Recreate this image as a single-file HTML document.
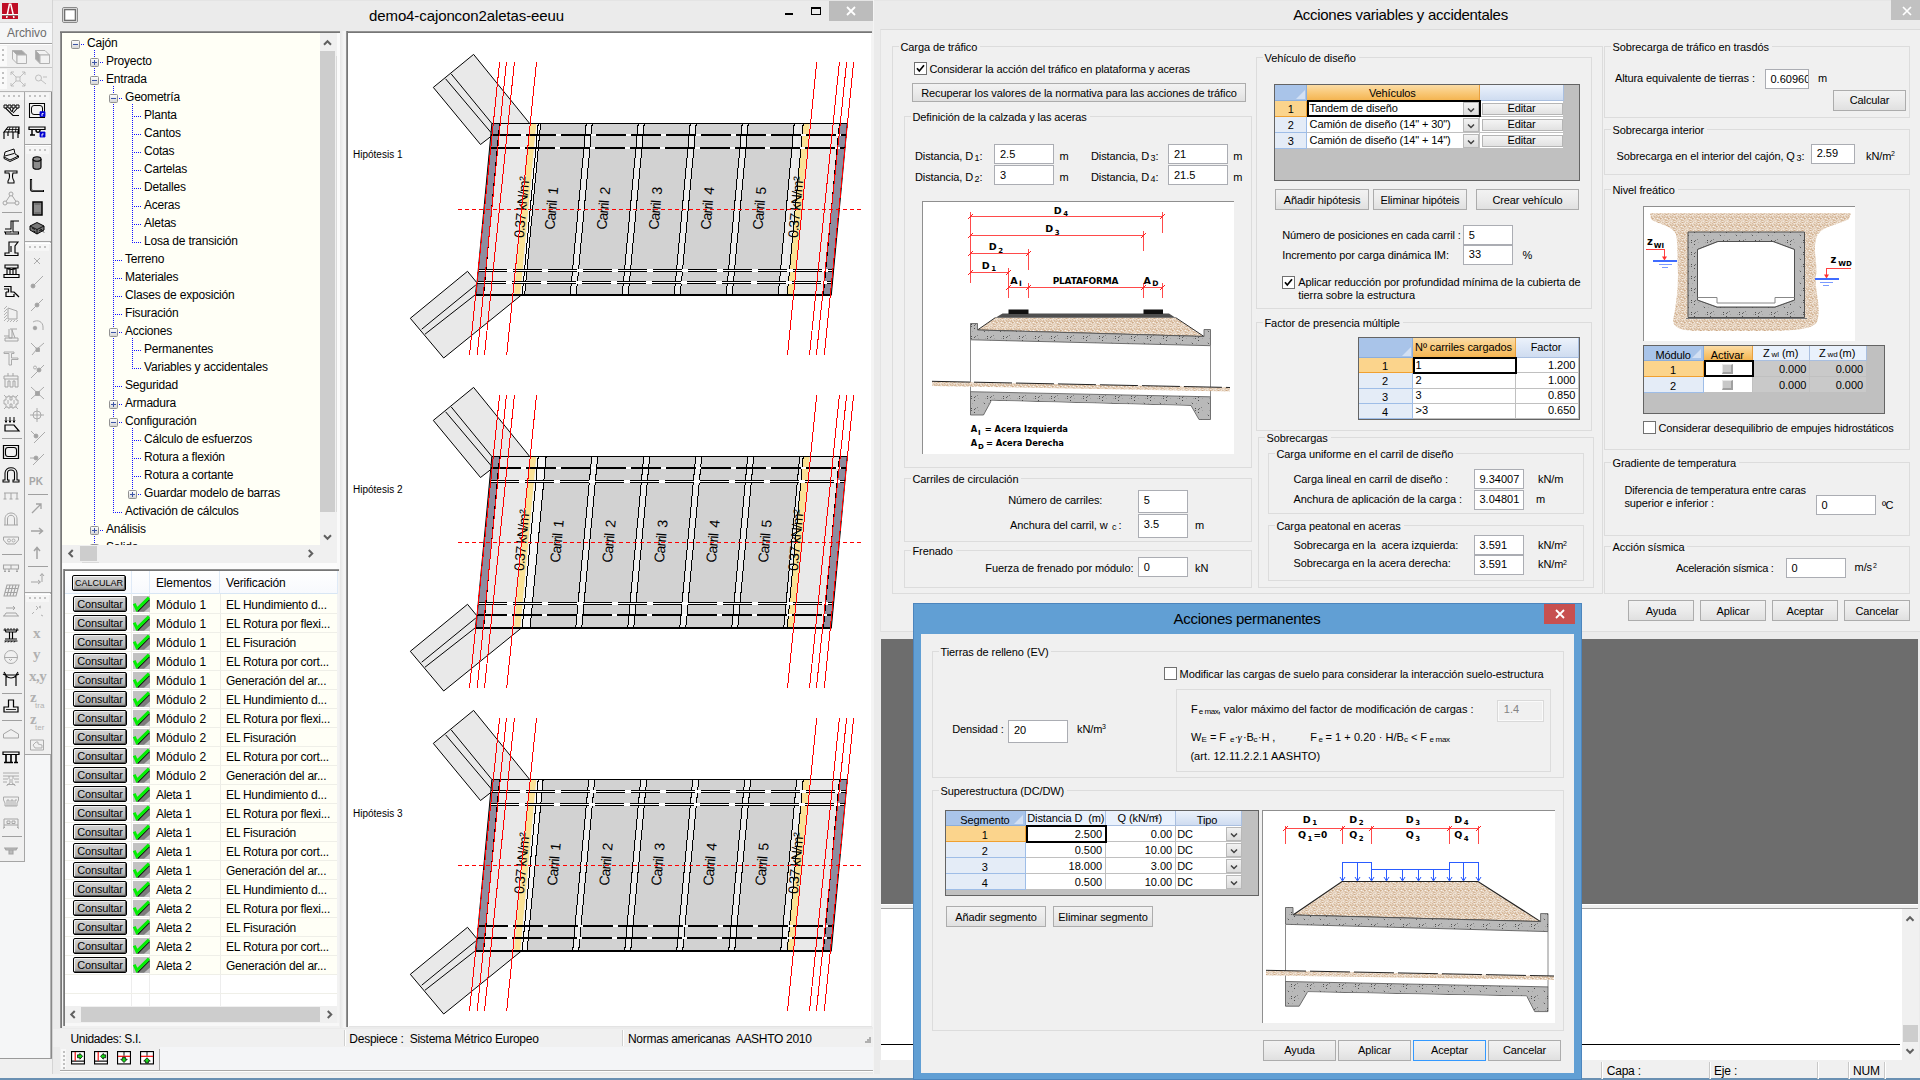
<!DOCTYPE html>
<html lang="es"><head><meta charset="utf-8"><title>demo4-cajoncon2aletas-eeuu</title>
<style>
html,body{margin:0;padding:0;width:1920px;height:1080px;overflow:hidden;background:#f0f0f0;}
body{position:relative;font-family:"Liberation Sans",sans-serif;font-size:12px;color:#000;}
div,span,svg{position:absolute;box-sizing:border-box;}
span{white-space:pre;}
svg{overflow:visible;}
.btn{border:1px solid #acacac;background:linear-gradient(#f2f2f2,#e4e4e4);text-align:center;font-size:11px;}
.inp{border:1px solid #abadb3;background:#fff;font-size:11px;}
.gb{border:1px solid #dcdcdc;}
</style></head><body>
<div style="left:0px;top:0px;width:52px;height:1080px;background:#f0f0f0;"></div>
<div style="left:0px;top:0px;width:52px;height:23px;background:#ebebeb;"></div>
<div style="left:0px;top:23px;width:52px;height:20px;background:#f5f6f7;"></div>
<div style="left:0px;top:22px;width:52px;height:1px;background:#dadada;"></div>
<div style="left:0px;top:43px;width:52px;height:1px;background:#a0a0a0;"></div>
<div style="left:0px;top:44px;width:52px;height:1px;background:#fff;"></div>
<div style="left:52px;top:0px;width:822px;height:1074px;background:#ebebeb;"></div>
<div style="left:52px;top:0px;width:822px;height:1px;background:#e4e4e4;"></div>
<div style="left:52px;top:0px;width:1px;height:1074px;background:#d4d4d4;"></div>
<div style="left:874px;top:0px;width:1046px;height:1080px;background:#ebebeb;"></div>
<div style="left:874px;top:0px;width:1046px;height:1px;background:#e6e6e6;"></div>
<div style="left:873px;top:0px;width:1px;height:1074px;background:#f4f4f4;"></div>
<div style="left:880px;top:29px;width:1040px;height:603px;background:#f0f0f0;border-top:1px solid #dadada;border-left:1px solid #e3e3e3;border-bottom:1px solid #dedede;"></div>
<div style="left:881px;top:639px;width:1037px;height:265px;background:#6d6d6d;"></div>
<div style="left:881px;top:904px;width:1037px;height:5px;background:#f0f0f0;border-top:1px solid #fff;border-bottom:1px solid #a0a0a0;"></div>
<div style="left:881px;top:909px;width:1021px;height:151px;background:#fff;"></div>
<div style="left:1902px;top:909px;width:17px;height:151px;background:#f0f0f0;"></div>
<div style="left:881px;top:1044px;width:1019px;height:1px;background:#000;"></div>
<div style="left:880px;top:1060px;width:1040px;height:20px;background:#f0f0f0;"></div>
<div style="left:0px;top:1074px;width:1920px;height:6px;background:#f0f0f0;"></div>
<div style="left:0px;top:1078px;width:1920px;height:2px;background:#6a90b2;"></div>
<div style="left:0px;top:92px;width:51px;height:982px;background:#f5f6f7;"></div>
<div style="left:50px;top:92px;width:1px;height:967px;background:#b4b4b4;"></div>
<div style="left:51px;top:92px;width:1px;height:967px;background:#8a8a8a;"></div>
<div style="left:0px;top:1058px;width:52px;height:1px;background:#9a9a9a;"></div>
<div style="left:0px;top:1059px;width:52px;height:15px;background:#f0f0f0;"></div>
<svg style="left:2px;top:3px" width="16" height="16" viewBox="0 0 16 16"><rect width="16" height="16" fill="#bf0d25"/><path d="M4.6 15 L7.4 1.2 H8.8 L12 15" stroke="#fff" stroke-width="1.5" fill="none" stroke-linejoin="miter"/><path d="M0 11.5 H16" stroke="#fff" stroke-width="1"/><path d="M0 12.5 H16" stroke="#8a6a6a" stroke-width="1"/></svg>
<span style="left:7px;top:26.84px;font-size:12px;line-height:12px;color:#6d6d6d;letter-spacing:-0.05px;">Archivo</span>
<div style="left:0px;top:45px;width:52px;height:22px;background:#f0f0f0;"></div>
<div style="left:0px;top:46px;width:7px;height:20px;background:#fafafa;"></div>
<div style="left:2px;top:49px;width:2px;height:2px;background:#c0c0c0;"></div>
<div style="left:2px;top:54px;width:2px;height:2px;background:#c0c0c0;"></div>
<div style="left:2px;top:59px;width:2px;height:2px;background:#c0c0c0;"></div>
<div style="left:0px;top:67px;width:52px;height:1px;background:#c5c5c5;"></div>
<div style="left:0px;top:68px;width:52px;height:23px;background:#f0f0f0;"></div>
<div style="left:0px;top:69px;width:7px;height:20px;background:#fafafa;"></div>
<div style="left:2px;top:72px;width:2px;height:2px;background:#c0c0c0;"></div>
<div style="left:2px;top:77px;width:2px;height:2px;background:#c0c0c0;"></div>
<div style="left:2px;top:82px;width:2px;height:2px;background:#c0c0c0;"></div>
<div style="left:0px;top:91px;width:52px;height:1px;background:#b5b5b5;"></div>
<svg style="left:11.5px;top:49.5px" width="16" height="15" viewBox="0 0 16 15"><path d="M.5 .5 H10 L14.5 5 H5Z" fill="#a6a6a6" stroke="#b2b2b2"/><path d="M.5 .5 L5 5 V13.5 L.5 9Z" fill="#f2f2f2" stroke="#b2b2b2"/><path d="M5 5 H14.5 V13.5 H5Z" fill="#f2f2f2" stroke="#b2b2b2"/></svg>
<svg style="left:34.5px;top:49.5px" width="16" height="15" viewBox="0 0 16 15"><path d="M.5 .5 H10 L14.5 5 H5Z" fill="#f2f2f2" stroke="#b2b2b2"/><path d="M.5 .5 L5 5 V13.5 L.5 9Z" fill="#a6a6a6" stroke="#b2b2b2"/><path d="M5 5 H14.5 V13.5 H5Z" fill="#f2f2f2" stroke="#b2b2b2"/></svg>
<svg style="left:9.0px;top:70.0px" width="18" height="18" viewBox="0 0 18 18"><path d="M2 2 L16 16 M2 16 L16 2 M2 5 V2 H5 M13 2 H16 V5 M2 13 V16 H5 M16 13 V16 H13" stroke="#b4b4b4" fill="none" stroke-width="0.82"/><path d="M7 7 h4 v4 h-4z" stroke="#b4b4b4" fill="#f0f0f0" stroke-width="0.82"/></svg>
<svg style="left:32.0px;top:70.0px" width="18" height="18" viewBox="0 0 18 18"><path d="M6.5 8 m-3 0 a3 3 0 1 0 6 0 a3 3 0 1 0 -6 0 M9 10 L14 14 M11 7 H15" stroke="#b4b4b4" fill="none" stroke-width="0.82"/></svg>
<div style="left:0px;top:92px;width:25px;height:770px;background:#f0f0f0;border-right:1px solid #a5a5a5;border-bottom:1px solid #a5a5a5;"></div>
<div style="left:0px;top:93px;width:24px;height:7px;background:#f6f6f6;"></div>
<div style="left:3px;top:95px;width:2px;height:2px;background:#c3c3c3;"></div>
<div style="left:8px;top:95px;width:2px;height:2px;background:#c3c3c3;"></div>
<div style="left:13px;top:95px;width:2px;height:2px;background:#c3c3c3;"></div>
<div style="left:18px;top:95px;width:2px;height:2px;background:#c3c3c3;"></div>
<svg style="left:2.0px;top:102.0px" width="18" height="18" viewBox="0 0 18 18"><path d="M2 3h3v3h-3z M6 3h3v3h-3z M10 3h3v3h-3z M14 3h3v3h-3z" stroke="#000" fill="none" stroke-width="0.98"/><path d="M3.5 6 L11 13.5 H17 M7.5 6 L9.5 9.5 M11.5 6 L10 10 M15.5 6 L11 11" stroke="#000" fill="none" stroke-width="1.07"/></svg>
<svg style="left:2.0px;top:124.0px" width="18" height="18" viewBox="0 0 18 18"><path d="M2 8 L6 3 H17 L16 8 Z M2 8 V15 M16 8 V14 M6 8 V12 M11 8 V15 M17 3 V10" stroke="#000" fill="none" stroke-width="1.15"/><path d="M4 5.5 H16.5 M8 3 L6.5 8 M11 3 L10 8 M14 3 L13.5 8" stroke="#000" fill="none" stroke-width="0.82"/></svg>
<svg style="left:2.0px;top:146.0px" width="18" height="18" viewBox="0 0 18 18"><path d="M3 6 L12 3 L13 8 L16.5 10 L8 14 L2 11 Z M2 11 L2 12.5 L8 15.5 L16.5 11.5 V10 M3 10 L12 7.5" stroke="#000" fill="none" stroke-width="0.98"/></svg>
<svg style="left:2.0px;top:168.0px" width="18" height="18" viewBox="0 0 18 18"><path d="M3 3 H15 V5 H11 C10 8 10 10 12 13 V15 H6 V13 C8 10 8 8 7 5 H3 Z" stroke="#000" fill="none" stroke-width="1.07"/></svg>
<svg style="left:2.0px;top:190.0px" width="18" height="18" viewBox="0 0 18 18"><path d="M9 4 L3 13 H15 Z" stroke="#a3a3a3" fill="none" stroke-width="0.98"/><path d="M9 4 m-2 0 a2 2 0 1 0 4 0 a2 2 0 1 0 -4 0 M3 13 m-2 0 a2 2 0 1 0 4 0 a2 2 0 1 0 -4 0 M15 13 m-2 0 a2 2 0 1 0 4 0 a2 2 0 1 0 -4 0" stroke="#a3a3a3" fill="#f0f0f0" stroke-width="0.98"/></svg>
<div style="left:2px;top:212px;width:20px;height:1px;background:#a0a0a0;"></div>
<svg style="left:2.0px;top:218.0px" width="18" height="18" viewBox="0 0 18 18"><path d="M17 3 H9 V11 H3 M2 14 H9 V13 M11 3.5 V14 H16.5 V16 H3.5 V14" stroke="#000" fill="none" stroke-width="1.07"/></svg>
<svg style="left:2.0px;top:239.0px" width="18" height="18" viewBox="0 0 18 18"><path d="M7 3 H16 L13 7 V14 H16 V16.5 H3 V14 H7 Z M9 7 V13" stroke="#000" fill="none" stroke-width="1.15"/></svg>
<svg style="left:2.0px;top:262.0px" width="18" height="18" viewBox="0 0 18 18"><path d="M3 3 H16 V6 H3 Z M5 6 V12 M8 6 V12 M11 6 V12 M14 6 V12 M2 12.5 H17 V15.5 H2 Z M5 6 C7 8 12 8 14 6" stroke="#000" fill="none" stroke-width="1.15"/></svg>
<svg style="left:2.0px;top:283.0px" width="18" height="18" viewBox="0 0 18 18"><path d="M2 3.5 H9 V9 H12 L14 11 L17 14 M4 9 V13.5 H12 V11 M4 9 H6.5 V6 H2" stroke="#000" fill="none" stroke-width="1.23"/></svg>
<svg style="left:2.0px;top:305.0px" width="18" height="18" viewBox="0 0 18 18"><path d="M6 3 L15 6 V14 H6 Z" stroke="#a3a3a3" fill="none" stroke-width="0.98"/><path d="M2 4 L5 1 M2 7 L5 4 M2 10 L5 7 M2 13 L5 10 M2 16 L5 13 M5 17 L7 15 M8 17 L10 15 M11 17 L13 15 M14 17 L16 15" stroke="#a3a3a3" fill="none" stroke-width="0.82"/></svg>
<svg style="left:2.0px;top:327.0px" width="18" height="18" viewBox="0 0 18 18"><path d="M15 2 H8 M7 2 V11 H10 V2 M10 3 L13 11 M3 11 H16 V14 H3 Z M2 9 H7" stroke="#a3a3a3" fill="none" stroke-width="0.98"/></svg>
<svg style="left:2.0px;top:349.0px" width="18" height="18" viewBox="0 0 18 18"><path d="M2 3 H12 V4.5 H9.5 V9 H16 V10.5 H9.5 V16 H7 V4.5 H2 Z" stroke="#a3a3a3" fill="none" stroke-width="0.90"/></svg>
<svg style="left:2.0px;top:371.0px" width="18" height="18" viewBox="0 0 18 18"><path d="M2 5 H16 V8 H2 Z M3 8 V16 H6 V10 H8 V16 H11 V10 H13 V16 H16 V8 M6 2 V5 M11 2 V5" stroke="#a3a3a3" fill="none" stroke-width="0.98"/></svg>
<svg style="left:2.0px;top:393.0px" width="18" height="18" viewBox="0 0 18 18"><path d="M2 2 L4 4 H6 V3 H8 V4 H10 V3 H12 V4 H14 L16 2 M4 4 V7 H2 V11 H4 V14 L2 16 M14 4 V7 H16 V11 H14 V14 L16 16 M4 14 H6 V15 H8 V14 H10 V15 H12 V14 H14 M8 4 V7 H10 V4 M8 14 V11 H10 V14 M6 7 V11 M12 7 V11" stroke="#a3a3a3" fill="none" stroke-width="0.90"/></svg>
<svg style="left:2.0px;top:415.0px" width="18" height="18" viewBox="0 0 18 18"><path d="M3 10 H12 L17 16 H3 Z" stroke="#000" fill="none" stroke-width="1.23"/><path d="M4 2 V7 M8 2 V7 M12 2 V7 M3 5.5 L4 7.5 L5 5.5 M7 5.5 L8 7.5 L9 5.5 M11 5.5 L12 7.5 L13 5.5" stroke="#000" fill="none" stroke-width="0.98"/></svg>
<div style="left:2px;top:438px;width:20px;height:1px;background:#a0a0a0;"></div>
<svg style="left:2.0px;top:443.0px" width="18" height="18" viewBox="0 0 18 18"><path d="M1.5 2.5 H16.5 V15.5 H1.5 Z" stroke="#000" fill="none" stroke-width="1.23"/><path d="M6 4.5 H12 Q14.5 4.5 14.5 7 V11 Q14.5 13.5 12 13.5 H6 Q3.5 13.5 3.5 11 V7 Q3.5 4.5 6 4.5Z" stroke="#000" fill="none" stroke-width="1.07"/></svg>
<svg style="left:2.0px;top:465.0px" width="18" height="18" viewBox="0 0 18 18"><path d="M3 15 V8 C3 1 15 1 15 8 V15 H17 V17 H11 V15 H12.5 V8 C12.5 4 5.5 4 5.5 8 V15 H7 V17 H1 V15 Z" stroke="#000" fill="none" stroke-width="1.07"/></svg>
<svg style="left:2.0px;top:488.0px" width="18" height="18" viewBox="0 0 18 18"><path d="M2 5 H16 M3 5 V11 M9 5 V11 M15 5 V11 M1.5 11 H4.5 M7.5 11 H10.5 M13.5 11 H16.5" stroke="#a3a3a3" fill="none" stroke-width="0.98"/></svg>
<svg style="left:2.0px;top:510.0px" width="18" height="18" viewBox="0 0 18 18"><path d="M2 15 H16 M3 15 V9 C3 1 15 1 15 9 V15 M5.5 15 V9 C5.5 4 12.5 4 12.5 9 V15" stroke="#a3a3a3" fill="none" stroke-width="0.98"/></svg>
<svg style="left:2.0px;top:532.0px" width="18" height="18" viewBox="0 0 18 18"><path d="M1.5 5 H16.5 V8 L13 12 H5 L1.5 8 Z" stroke="#a3a3a3" fill="none" stroke-width="0.98"/><path d="M7 8.5 m-1.5 0 a1.5 1.5 0 1 0 3 0 a1.5 1.5 0 1 0 -3 0 M11.5 8.5 m-1.5 0 a1.5 1.5 0 1 0 3 0 a1.5 1.5 0 1 0 -3 0" stroke="#a3a3a3" fill="none" stroke-width="0.82"/></svg>
<div style="left:2px;top:554px;width:20px;height:1px;background:#a0a0a0;"></div>
<svg style="left:2.0px;top:560.0px" width="18" height="18" viewBox="0 0 18 18"><path d="M1.5 5 H16.5 V9 H1.5 Z M9 5 V9 M3 9 v2 M7 9 v2 M15 9 v2 M2 11.5 h2 M6 11.5 h2 M14 11.5 h2" stroke="#a3a3a3" fill="none" stroke-width="1.07"/></svg>
<svg style="left:2.0px;top:582.0px" width="18" height="18" viewBox="0 0 18 18"><path d="M5 3 H17 L14 14 H2 Z M4 6.5 H16 M3 10.5 H15 M8 3 L5 14 M11 3 L8 14 M14 3 L11 14" stroke="#a3a3a3" fill="none" stroke-width="1.07"/></svg>
<svg style="left:2.0px;top:604.0px" width="18" height="18" viewBox="0 0 18 18"><path d="M4 4 H13 M11 2 L13 4 L11 6 M2 12 L4 9 H14 L16 12 M1 12 H17" stroke="#a3a3a3" fill="none" stroke-width="0.98"/></svg>
<svg style="left:2.0px;top:626.0px" width="18" height="18" viewBox="0 0 18 18"><path d="M1.5 4 H16.5 M3 4 L4 6 H14 L15 4 M7.5 6 V13 M10.5 6 V13 M3 13 H15 M2.5 15 H15.5" stroke="#000" fill="none" stroke-width="1.15"/><path d="M3 2 v2 M6 2 v2 M9 2 v2 M12 2 v2 M15 2 v2 M4 15 l-1 1.5 M7 15 l-1 1.5 M10 15 l-1 1.5 M13 15 l-1 1.5" stroke="#000" fill="none" stroke-width="0.82"/></svg>
<svg style="left:2.0px;top:648.0px" width="18" height="18" viewBox="0 0 18 18"><path d="M9 9 m-6.5 0 a6.5 6.5 0 1 0 13 0 a6.5 6.5 0 1 0 -13 0 M2.5 9.5 H15.5 M7 11 L8.5 12.5 L10 11" stroke="#a3a3a3" fill="none" stroke-width="0.90"/></svg>
<svg style="left:2.0px;top:670.0px" width="18" height="18" viewBox="0 0 18 18"><path d="M1 4 L3 5 H15 L17 4 M4 5 V16 M14 5 V16 M4 6 Q9 10 14 6 M2 2 L4 5 M16 2 L14 5" stroke="#000" fill="none" stroke-width="1.15"/></svg>
<div style="left:2px;top:693px;width:20px;height:1px;background:#a0a0a0;"></div>
<svg style="left:2.0px;top:697.0px" width="18" height="18" viewBox="0 0 18 18"><path d="M6.5 3 H11.5 V10 H16 V15 H2 V10 H6.5 Z" stroke="#000" fill="none" stroke-width="1.23"/><path d="M4 12.5 H14" stroke="#000" fill="none" stroke-width="0.82"/></svg>
<div style="left:2px;top:720px;width:20px;height:1px;background:#a0a0a0;"></div>
<svg style="left:2.0px;top:726.0px" width="18" height="18" viewBox="0 0 18 18"><path d="M1.5 8 L9 3.5 L16.5 8 V12 H1.5 Z" stroke="#a3a3a3" fill="none" stroke-width="0.98"/></svg>
<svg style="left:2.0px;top:748.0px" width="18" height="18" viewBox="0 0 18 18"><path d="M1 4 H17 V6.5 H1 Z" stroke="#000" fill="none" stroke-width="1.23"/><path d="M4 7 V15 M9 7 V15 M14 7 V15 M2 14.5 H7 M7 14.5 H11 M12 14.5 H16" stroke="#000" fill="none" stroke-width="1.64"/></svg>
<svg style="left:2.0px;top:770.0px" width="18" height="18" viewBox="0 0 18 18"><path d="M1 3 H17 M1 6 H17 M1 9 H6 M12 9 H17 M1 12 H5 M13 12 H17 M7 6 V9 M11 6 V9 M8 9 V13 L5 15 V16 M10 9 V13 L13 15 V16 M5 14.5 H13" stroke="#a3a3a3" fill="none" stroke-width="0.90"/></svg>
<svg style="left:2.0px;top:792.0px" width="18" height="18" viewBox="0 0 18 18"><path d="M1.5 5 H16.5 V8 L15 11 V14 H3 V11 L1.5 8 Z M5 8 V14 M7 8 V14 M9 8 V14 M11 8 V14 M13 8 V14 M5 8 H7 M9 8 H11 M13 8 H15" stroke="#a3a3a3" fill="none" stroke-width="0.90"/></svg>
<svg style="left:2.0px;top:814.0px" width="18" height="18" viewBox="0 0 18 18"><path d="M2 5 H16 V11 H2 Z M5 7 H8 V9.5 H5 Z M10 7 H13 V9.5 H10 Z M2 11 V14 M16 11 V14 M1 14.5 L3 13 M17 14.5 L15 13" stroke="#a3a3a3" fill="none" stroke-width="0.98"/></svg>
<div style="left:2px;top:836px;width:20px;height:1px;background:#a0a0a0;"></div>
<svg style="left:2.0px;top:842.0px" width="18" height="18" viewBox="0 0 18 18"><path d="M2 6 H16 M3 6 L4 8 H14 L15 6 M7 8 V12 H11 V8" stroke="#a3a3a3" fill="#bbb" stroke-width="1.07"/></svg>
<div style="left:25px;top:92px;width:26px;height:53px;background:#f0f0f0;border-bottom:1px solid #a5a5a5;"></div>
<div style="left:26px;top:93px;width:23px;height:7px;background:#f6f6f6;"></div>
<div style="left:29px;top:95px;width:2px;height:2px;background:#c3c3c3;"></div>
<div style="left:34px;top:95px;width:2px;height:2px;background:#c3c3c3;"></div>
<div style="left:39px;top:95px;width:2px;height:2px;background:#c3c3c3;"></div>
<div style="left:44px;top:95px;width:2px;height:2px;background:#c3c3c3;"></div>
<svg style="left:28.0px;top:102.0px" width="18" height="18" viewBox="0 0 18 18"><path d="M1.5 1.5 H16.5 V15.5 H1.5 Z" stroke="#000" fill="#f4f4f4" stroke-width="1.07"/><path d="M6 3.5 H12 Q14.5 3.5 14.5 6 V10 Q14.5 12.5 12 12.5 H6 Q3.5 12.5 3.5 10 V6 Q3.5 3.5 6 3.5Z" stroke="#000" fill="none" stroke-width="0.98"/><path d="M12 9.7 H17 V14.5 H12 Z" stroke="#0000d0" fill="#0000d0" stroke-width="0.82"/><path d="M14 14 V11.6 H15.6" stroke="#fff" fill="none" stroke-width="0.98"/></svg>
<svg style="left:28.0px;top:124.0px" width="18" height="18" viewBox="0 0 18 18"><path d="M1 3 H17 V5.5 H1 Z" stroke="#000" fill="none" stroke-width="1.23"/><path d="M4 6 V11 M8 6 C8 9 12 9 12 6 M2 11 H7" stroke="#000" fill="none" stroke-width="1.48"/><path d="M12 8 H17 V13 H12 Z" stroke="#0000d0" fill="#0000d0" stroke-width="0.82"/><path d="M14 12.5 V10 H15.6" stroke="#fff" fill="none" stroke-width="0.98"/></svg>
<div style="left:25px;top:145px;width:26px;height:97px;background:#f0f0f0;border-bottom:1px solid #a5a5a5;border-top:1px solid #fff;"></div>
<div style="left:26px;top:147px;width:23px;height:7px;background:#f6f6f6;"></div>
<div style="left:29px;top:149px;width:2px;height:2px;background:#c3c3c3;"></div>
<div style="left:34px;top:149px;width:2px;height:2px;background:#c3c3c3;"></div>
<div style="left:39px;top:149px;width:2px;height:2px;background:#c3c3c3;"></div>
<div style="left:44px;top:149px;width:2px;height:2px;background:#c3c3c3;"></div>
<svg style="left:28.0px;top:154.0px" width="18" height="18" viewBox="0 0 18 18"><path d="M5 5 V13 C5 16 13 16 13 13 V5" stroke="#000" fill="#8c8c8c" stroke-width="1.15"/><path d="M5 5 C5 2 13 2 13 5 C13 8 5 8 5 5Z" stroke="#000" fill="#8c8c8c" stroke-width="1.15"/></svg>
<svg style="left:28.0px;top:177.0px" width="18" height="18" viewBox="0 0 18 18"><path d="M3 2 V12 Q3 14 5 14 H16" stroke="#000" fill="none" stroke-width="2.13"/><path d="M3.2 3 V12 Q3.2 13.8 5 13.8 H15" stroke="#d0d0d0" fill="none" stroke-width="0.57"/></svg>
<svg style="left:28.0px;top:199.0px" width="18" height="18" viewBox="0 0 18 18"><path d="M5 3 H14 V16 H5 Z" stroke="#000" fill="#8c8c8c" stroke-width="1.48"/><path d="M6.5 5 H12.5 M6.5 14 H12.5" stroke="#4a4a4a" fill="none" stroke-width="0.82"/></svg>
<svg style="left:28.0px;top:219.0px" width="18" height="18" viewBox="0 0 18 18"><path d="M2 7 L9 3.5 L16 7 V11 L9 15 L2 11 Z" stroke="#000" fill="#777" stroke-width="0.98"/><path d="M2 7 L9 10.5 L16 7 M9 10.5 V15 M4 9 l3 1.5 M11 12 l3 -1.5 M5.5 12 l2 1 M12 9.5 l4 4" stroke="#000" fill="none" stroke-width="0.82"/></svg>
<div style="left:25px;top:243px;width:26px;height:350px;background:#f0f0f0;border-bottom:1px solid #a5a5a5;border-top:1px solid #fff;"></div>
<div style="left:26px;top:244px;width:23px;height:7px;background:#f6f6f6;"></div>
<div style="left:29px;top:246px;width:2px;height:2px;background:#c3c3c3;"></div>
<div style="left:34px;top:246px;width:2px;height:2px;background:#c3c3c3;"></div>
<div style="left:39px;top:246px;width:2px;height:2px;background:#c3c3c3;"></div>
<div style="left:44px;top:246px;width:2px;height:2px;background:#c3c3c3;"></div>
<svg style="left:28.0px;top:252.0px" width="18" height="18" viewBox="0 0 18 18"><path d="M6 6 L12 12 M12 6 L6 12" stroke="#a3a3a3" fill="none" stroke-width="0.90"/></svg>
<svg style="left:28.0px;top:274.0px" width="18" height="18" viewBox="0 0 18 18"><path d="M15 2 L5 12" stroke="#a3a3a3" fill="none" stroke-width="0.90"/><path d="M5 12 m-2 0 a2 2 0 1 0 4 0 a2 2 0 1 0 -4 0" stroke="#a3a3a3" fill="#a3a3a3" stroke-width="0.82"/></svg>
<svg style="left:28.0px;top:296.0px" width="18" height="18" viewBox="0 0 18 18"><path d="M15 3 L3 15" stroke="#a3a3a3" fill="none" stroke-width="0.90"/><path d="M9 9 m-2 0 a2 2 0 1 0 4 0 a2 2 0 1 0 -4 0" stroke="#a3a3a3" fill="#a3a3a3" stroke-width="0.82"/></svg>
<svg style="left:28.0px;top:318.0px" width="18" height="18" viewBox="0 0 18 18"><path d="M5 4 C10 1 15 4 15 9 V12" stroke="#a3a3a3" fill="none" stroke-width="0.90"/><path d="M7 10 m-1.8 0 a1.8 1.8 0 1 0 3.6 0 a1.8 1.8 0 1 0 -3.6 0" stroke="#a3a3a3" fill="#a3a3a3" stroke-width="0.82"/></svg>
<svg style="left:28.0px;top:340.0px" width="18" height="18" viewBox="0 0 18 18"><path d="M3 3 L9 9 L16 3 M9 9 L4 15" stroke="#a3a3a3" fill="none" stroke-width="0.90"/><path d="M8 8 h3.5 v3.5 h-3.5z" stroke="#a3a3a3" fill="#a3a3a3" stroke-width="0.82"/></svg>
<svg style="left:28.0px;top:362.0px" width="18" height="18" viewBox="0 0 18 18"><path d="M16 3 L3 16" stroke="#a3a3a3" fill="none" stroke-width="0.90"/><path d="M11 8 m-2 0 a2 2 0 1 0 4 0 a2 2 0 1 0 -4 0" stroke="#a3a3a3" fill="#a3a3a3" stroke-width="0.82"/><path d="M7 5.5 m-1.5 0 a1.5 1.5 0 1 0 3 0 a1.5 1.5 0 1 0 -3 0" stroke="#a3a3a3" fill="none" stroke-width="0.82"/></svg>
<svg style="left:28.0px;top:384.0px" width="18" height="18" viewBox="0 0 18 18"><path d="M3 3 L16 15 M16 3 L3 15" stroke="#a3a3a3" fill="none" stroke-width="0.90"/><path d="M7.5 7.5 h4 v4 h-4z" stroke="#a3a3a3" fill="#a3a3a3" stroke-width="0.82"/></svg>
<svg style="left:28.0px;top:406.0px" width="18" height="18" viewBox="0 0 18 18"><path d="M9 2 V16 M2 9 H16 M9 9 m-4 0 a4 4 0 1 0 8 0 a4 4 0 1 0 -8 0" stroke="#a3a3a3" fill="none" stroke-width="0.90"/></svg>
<svg style="left:28.0px;top:428.0px" width="18" height="18" viewBox="0 0 18 18"><path d="M17 4 L6 15 M3 3 L8 8" stroke="#a3a3a3" fill="none" stroke-width="0.90"/><path d="M8 8 m-2 0 a2 2 0 1 0 4 0 a2 2 0 1 0 -4 0" stroke="#a3a3a3" fill="#a3a3a3" stroke-width="0.82"/></svg>
<svg style="left:28.0px;top:450.0px" width="18" height="18" viewBox="0 0 18 18"><path d="M16 4 L5 15 M2 8 H8" stroke="#a3a3a3" fill="none" stroke-width="0.90"/><path d="M8 8 m-2 0 a2 2 0 1 0 4 0 a2 2 0 1 0 -4 0" stroke="#a3a3a3" fill="#a3a3a3" stroke-width="0.82"/></svg>
<span style="left:29px;top:476.54px;font-size:10px;line-height:10px;color:#a6a6a6;font-weight:bold;">PK</span>
<div style="left:28px;top:494px;width:20px;height:1px;background:#a0a0a0;"></div>
<svg style="left:28.0px;top:499.0px" width="18" height="18" viewBox="0 0 18 18"><path d="M4 14 L13 5 M8 5 H13 V10" stroke="#a3a3a3" fill="none" stroke-width="1.31"/></svg>
<svg style="left:28.0px;top:522.0px" width="18" height="18" viewBox="0 0 18 18"><path d="M3 9 H14 M11 6 L14.5 9 L11 12" stroke="#a3a3a3" fill="none" stroke-width="1.48"/></svg>
<svg style="left:28.0px;top:544.0px" width="18" height="18" viewBox="0 0 18 18"><path d="M9 15 V4 M6 7 L9 3.5 L12 7" stroke="#a3a3a3" fill="none" stroke-width="1.48"/></svg>
<div style="left:28px;top:566px;width:20px;height:1px;background:#a0a0a0;"></div>
<svg style="left:28.0px;top:570.0px" width="18" height="18" viewBox="0 0 18 18"><path d="M3 12 H12 M10 10 L12.5 12 L10 14 M14 12 V4 M12 6 L14 3.5 L16 6" stroke="#a3a3a3" fill="none" stroke-width="0.98"/></svg>
<div style="left:25px;top:594px;width:26px;height:161px;background:#f0f0f0;border-bottom:1px solid #a5a5a5;border-top:1px solid #fff;"></div>
<div style="left:26px;top:595px;width:23px;height:7px;background:#f6f6f6;"></div>
<div style="left:29px;top:597px;width:2px;height:2px;background:#c3c3c3;"></div>
<div style="left:34px;top:597px;width:2px;height:2px;background:#c3c3c3;"></div>
<div style="left:39px;top:597px;width:2px;height:2px;background:#c3c3c3;"></div>
<div style="left:44px;top:597px;width:2px;height:2px;background:#c3c3c3;"></div>
<svg style="left:28.0px;top:602.0px" width="18" height="18" viewBox="0 0 18 18"><path d="M4 12 l2 -2 M8 4 l2 2 l-2 2 M13 4 l-2 1 l2 1 M13 13 l2 1" stroke="#a3a3a3" fill="none" stroke-width="0.82"/></svg>
<span style="left:33px;top:626.30px;font-size:15px;line-height:15px;color:#b0b0b0;font-family:'Liberation Serif',serif;font-weight:bold;">x</span>
<span style="left:33px;top:647.30px;font-size:15px;line-height:15px;color:#b0b0b0;font-family:'Liberation Serif',serif;font-weight:bold;">y</span>
<span style="left:29px;top:669.30px;font-size:15px;line-height:15px;color:#b0b0b0;letter-spacing:-0.5px;font-family:'Liberation Serif',serif;font-weight:bold;">x,y</span>
<span style="left:30px;top:690.30px;font-size:15px;line-height:15px;color:#b0b0b0;font-family:'Liberation Serif',serif;font-weight:bold;">z</span>
<span style="left:35px;top:702.23px;font-size:8px;line-height:8px;color:#b0b0b0;">tra</span>
<span style="left:30px;top:712.30px;font-size:15px;line-height:15px;color:#b0b0b0;font-family:'Liberation Serif',serif;font-weight:bold;">z</span>
<span style="left:35px;top:724.23px;font-size:8px;line-height:8px;color:#b0b0b0;">ter</span>
<svg style="left:28.0px;top:736.0px" width="18" height="18" viewBox="0 0 18 18"><path d="M2.5 4 H15.5 V14 H2.5 Z" stroke="#a3a3a3" fill="none" stroke-width="0.90"/><path d="M5 9 L8 6 H10 V8 L14 9 V12 H7 Z" stroke="#a3a3a3" fill="none" stroke-width="0.82"/></svg>
<svg style="left:62px;top:7px" width="16" height="16" viewBox="0 0 16 16"><rect x=".5" y=".5" width="15" height="15" rx="1.5" fill="#fff" stroke="#8a8a8a"/><rect x="2.5" y="2.5" width="11" height="11" fill="#fff" stroke="#707070" stroke-width="1.6"/></svg>
<span style="left:369px;top:8.10px;font-size:15px;line-height:15px;color:#000;letter-spacing:-0.1px;">demo4-cajoncon2aletas-eeuu</span>
<div style="left:785px;top:13px;width:8px;height:2px;background:#000;"></div>
<div style="left:811px;top:7px;width:10px;height:8px;border:1px solid #000;border-top:2px solid #000;"></div>
<div style="left:829px;top:1px;width:44px;height:20px;background:#bcbcbc;"></div>
<svg style="left:846px;top:6px" width="10" height="10" viewBox="0 0 10 10"><path d="M1 1 L9 9 M9 1 L1 9" stroke="#fff" stroke-width="1.8" fill="none"/></svg>
<div style="left:60px;top:31px;width:282px;height:997px;background:#f0f0f0;"></div>
<div style="left:60px;top:31px;width:2px;height:997px;background:linear-gradient(90deg,#a0a0a0,#696969);"></div>
<div style="left:60px;top:31px;width:280px;height:2px;background:linear-gradient(#a0a0a0,#696969);"></div>
<div style="left:62px;top:33px;width:258px;height:512px;background:#fffff6;"></div>
<div style="left:320px;top:33px;width:17px;height:513px;background:#f0f0f0;"></div>
<div style="left:320px;top:51px;width:15px;height:461px;background:#cdcdcd;"></div>
<div style="left:336px;top:56px;width:1px;height:456px;background:#dadada;"></div>
<svg style="left:0;top:0" width="1" height="1"><path d="M324.0 44.75 L327.5 41.25 L331.0 44.75" stroke="#606060" stroke-width="2" fill="none"/></svg>
<svg style="left:0;top:0" width="1" height="1"><path d="M324.0 535.25 L327.5 538.75 L331.0 535.25" stroke="#606060" stroke-width="2" fill="none"/></svg>
<div style="left:62px;top:545px;width:275px;height:18px;background:#f0f0f0;"></div>
<div style="left:80px;top:546px;width:17px;height:15px;background:#cdcdcd;"></div>
<div style="left:82px;top:562px;width:17px;height:1px;background:#dadada;"></div>
<svg style="left:0;top:0" width="1" height="1"><path d="M72.75 550.0 L69.25 553.5 L72.75 557.0" stroke="#606060" stroke-width="2" fill="none"/></svg>
<svg style="left:0;top:0" width="1" height="1"><path d="M308.75 550.0 L312.25 553.5 L308.75 557.0" stroke="#606060" stroke-width="2" fill="none"/></svg>
<div style="left:62px;top:563px;width:278px;height:6px;background:#fcfcfc;"></div>
<div style="left:337px;top:33px;width:3px;height:536px;background:#fafafa;"></div>
<div style="left:340px;top:31px;width:7px;height:997px;background:linear-gradient(90deg,#e6e6e6,#f6f6f6 60%,#ededed);"></div>
<svg style="left:0;top:0;overflow:hidden" width="345" height="545" viewBox="0 0 345 545"><defs><linearGradient id="tbx" x1="0" y1="0" x2="0" y2="1"><stop offset="0" stop-color="#ffffff"/><stop offset="1" stop-color="#d4d4d4"/></linearGradient></defs><g stroke="#1414ff" stroke-width="1" stroke-dasharray="1 1" fill="none" shape-rendering="crispEdges"><path d="M94.5 50.0 V546"/><path d="M113.5 86.0 V513.0"/><path d="M132.5 104.0 V243.0"/><path d="M132.5 338.0 V369.0"/><path d="M132.5 428.0 V490.0"/><path d="M81.0 44.5 H84.0"/><path d="M100.0 62.5 H103.0"/><path d="M100.0 80.5 H103.0"/><path d="M119.0 98.5 H122.0"/><path d="M134.0 116.5 H142.0"/><path d="M134.0 134.5 H142.0"/><path d="M134.0 152.5 H142.0"/><path d="M134.0 170.5 H142.0"/><path d="M134.0 188.5 H142.0"/><path d="M134.0 206.5 H142.0"/><path d="M134.0 224.5 H142.0"/><path d="M134.0 242.5 H142.0"/><path d="M115.0 260.5 H123.0"/><path d="M115.0 278.5 H123.0"/><path d="M115.0 296.5 H123.0"/><path d="M115.0 314.5 H123.0"/><path d="M119.0 332.5 H122.0"/><path d="M134.0 350.5 H142.0"/><path d="M134.0 368.5 H142.0"/><path d="M115.0 386.5 H123.0"/><path d="M119.0 404.5 H122.0"/><path d="M119.0 422.5 H122.0"/><path d="M134.0 440.5 H142.0"/><path d="M134.0 458.5 H142.0"/><path d="M134.0 476.5 H142.0"/><path d="M138.0 494.5 H141.0"/><path d="M115.0 512.5 H123.0"/><path d="M100.0 530.5 H103.0"/></g><rect x="71.5" y="40.5" width="8" height="8" rx="1" fill="url(#tbx)" stroke="#919191"/><path d="M73.0 44.5 H78.0" stroke="#3c55a5" stroke-width="1" shape-rendering="crispEdges"/><rect x="90.5" y="58.5" width="8" height="8" rx="1" fill="url(#tbx)" stroke="#919191"/><path d="M92.0 62.5 H97.0" stroke="#3c55a5" stroke-width="1" shape-rendering="crispEdges"/><path d="M94.5 60.0 V65.0" stroke="#3c55a5" stroke-width="1" shape-rendering="crispEdges"/><rect x="90.5" y="76.5" width="8" height="8" rx="1" fill="url(#tbx)" stroke="#919191"/><path d="M92.0 80.5 H97.0" stroke="#3c55a5" stroke-width="1" shape-rendering="crispEdges"/><rect x="109.5" y="94.5" width="8" height="8" rx="1" fill="url(#tbx)" stroke="#919191"/><path d="M111.0 98.5 H116.0" stroke="#3c55a5" stroke-width="1" shape-rendering="crispEdges"/><rect x="109.5" y="328.5" width="8" height="8" rx="1" fill="url(#tbx)" stroke="#919191"/><path d="M111.0 332.5 H116.0" stroke="#3c55a5" stroke-width="1" shape-rendering="crispEdges"/><rect x="109.5" y="400.5" width="8" height="8" rx="1" fill="url(#tbx)" stroke="#919191"/><path d="M111.0 404.5 H116.0" stroke="#3c55a5" stroke-width="1" shape-rendering="crispEdges"/><path d="M113.5 402.0 V407.0" stroke="#3c55a5" stroke-width="1" shape-rendering="crispEdges"/><rect x="109.5" y="418.5" width="8" height="8" rx="1" fill="url(#tbx)" stroke="#919191"/><path d="M111.0 422.5 H116.0" stroke="#3c55a5" stroke-width="1" shape-rendering="crispEdges"/><rect x="128.5" y="490.5" width="8" height="8" rx="1" fill="url(#tbx)" stroke="#919191"/><path d="M130.0 494.5 H135.0" stroke="#3c55a5" stroke-width="1" shape-rendering="crispEdges"/><path d="M132.5 492.0 V497.0" stroke="#3c55a5" stroke-width="1" shape-rendering="crispEdges"/><rect x="90.5" y="526.5" width="8" height="8" rx="1" fill="url(#tbx)" stroke="#919191"/><path d="M92.0 530.5 H97.0" stroke="#3c55a5" stroke-width="1" shape-rendering="crispEdges"/><path d="M94.5 528.0 V533.0" stroke="#3c55a5" stroke-width="1" shape-rendering="crispEdges"/><rect x="90.5" y="544.5" width="8" height="8" rx="1" fill="url(#tbx)" stroke="#919191"/><path d="M92.0 548.5 H97.0" stroke="#3c55a5" stroke-width="1" shape-rendering="crispEdges"/><path d="M94.5 546.0 V551.0" stroke="#3c55a5" stroke-width="1" shape-rendering="crispEdges"/></svg>
<div style="left:62px;top:33px;width:258px;height:512px;overflow:hidden;">
<span style="left:25.0px;top:3.84px;font-size:12px;line-height:12px;color:#000;letter-spacing:-0.2px;">Cajón</span>
<span style="left:44.0px;top:21.84px;font-size:12px;line-height:12px;color:#000;letter-spacing:-0.2px;">Proyecto</span>
<span style="left:44.0px;top:39.84px;font-size:12px;line-height:12px;color:#000;letter-spacing:-0.2px;">Entrada</span>
<span style="left:63.0px;top:57.84px;font-size:12px;line-height:12px;color:#000;letter-spacing:-0.2px;">Geometría</span>
<span style="left:82.0px;top:75.84px;font-size:12px;line-height:12px;color:#000;letter-spacing:-0.2px;">Planta</span>
<span style="left:82.0px;top:93.84px;font-size:12px;line-height:12px;color:#000;letter-spacing:-0.2px;">Cantos</span>
<span style="left:82.0px;top:111.84px;font-size:12px;line-height:12px;color:#000;letter-spacing:-0.2px;">Cotas</span>
<span style="left:82.0px;top:129.84px;font-size:12px;line-height:12px;color:#000;letter-spacing:-0.2px;">Cartelas</span>
<span style="left:82.0px;top:147.84px;font-size:12px;line-height:12px;color:#000;letter-spacing:-0.2px;">Detalles</span>
<span style="left:82.0px;top:165.84px;font-size:12px;line-height:12px;color:#000;letter-spacing:-0.2px;">Aceras</span>
<span style="left:82.0px;top:183.84px;font-size:12px;line-height:12px;color:#000;letter-spacing:-0.2px;">Aletas</span>
<span style="left:82.0px;top:201.84px;font-size:12px;line-height:12px;color:#000;letter-spacing:-0.2px;">Losa de transición</span>
<span style="left:63.0px;top:219.84px;font-size:12px;line-height:12px;color:#000;letter-spacing:-0.2px;">Terreno</span>
<span style="left:63.0px;top:237.84px;font-size:12px;line-height:12px;color:#000;letter-spacing:-0.2px;">Materiales</span>
<span style="left:63.0px;top:255.84px;font-size:12px;line-height:12px;color:#000;letter-spacing:-0.2px;">Clases de exposición</span>
<span style="left:63.0px;top:273.84px;font-size:12px;line-height:12px;color:#000;letter-spacing:-0.2px;">Fisuración</span>
<span style="left:63.0px;top:291.84px;font-size:12px;line-height:12px;color:#000;letter-spacing:-0.2px;">Acciones</span>
<span style="left:82.0px;top:309.84px;font-size:12px;line-height:12px;color:#000;letter-spacing:-0.2px;">Permanentes</span>
<span style="left:82.0px;top:327.84px;font-size:12px;line-height:12px;color:#000;letter-spacing:-0.2px;">Variables y accidentales</span>
<span style="left:63.0px;top:345.84px;font-size:12px;line-height:12px;color:#000;letter-spacing:-0.2px;">Seguridad</span>
<span style="left:63.0px;top:363.84px;font-size:12px;line-height:12px;color:#000;letter-spacing:-0.2px;">Armadura</span>
<span style="left:63.0px;top:381.84px;font-size:12px;line-height:12px;color:#000;letter-spacing:-0.2px;">Configuración</span>
<span style="left:82.0px;top:399.84px;font-size:12px;line-height:12px;color:#000;letter-spacing:-0.2px;">Cálculo de esfuerzos</span>
<span style="left:82.0px;top:417.84px;font-size:12px;line-height:12px;color:#000;letter-spacing:-0.2px;">Rotura a flexión</span>
<span style="left:82.0px;top:435.84px;font-size:12px;line-height:12px;color:#000;letter-spacing:-0.2px;">Rotura a cortante</span>
<span style="left:82.0px;top:453.84px;font-size:12px;line-height:12px;color:#000;letter-spacing:-0.2px;">Guardar modelo de barras</span>
<span style="left:63.0px;top:471.84px;font-size:12px;line-height:12px;color:#000;letter-spacing:-0.2px;">Activación de cálculos</span>
<span style="left:44.0px;top:489.84px;font-size:12px;line-height:12px;color:#000;letter-spacing:-0.2px;">Análisis</span>
<span style="left:44.0px;top:507.84px;font-size:12px;line-height:12px;color:#000;letter-spacing:-0.2px;">Salida</span>
</div>
<div style="left:63px;top:569px;width:276px;height:457px;background:#fffff6;"></div>
<div style="left:63px;top:569px;width:276px;height:2px;background:linear-gradient(#a0a0a0,#696969);"></div>
<div style="left:63px;top:569px;width:2px;height:457px;background:linear-gradient(90deg,#a0a0a0,#696969);"></div>
<div style="left:337px;top:571px;width:2px;height:455px;background:#f3f3f3;"></div>
<div style="left:65px;top:594px;width:85px;height:412px;background:#fff;"></div>
<div style="left:65px;top:571px;width:272px;height:23px;background:linear-gradient(#ffffff,#f7f9fd);border-bottom:1px solid #d8e6f4;"></div>
<div style="left:131px;top:571px;width:1px;height:23px;background:#dfeaf7;"></div>
<div style="left:149px;top:571px;width:1px;height:23px;background:#dfeaf7;"></div>
<div style="left:219px;top:571px;width:1px;height:23px;background:#dfeaf7;"></div>
<div style="left:337px;top:571px;width:1px;height:23px;background:#dfeaf7;"></div>
<div style="left:72px;top:575px;width:54px;height:16px;border:1px solid #000;border-radius:2px;background:linear-gradient(#dcdcdc,#bdbdbd 70%,#8f8f8f);box-shadow:inset -1px -1px 0 #5a5a5a, inset 1px 1px 0 #f4f4f4;"></div>
<span style="left:69.0px;width:60px;text-align:center;top:578.68px;font-size:9px;line-height:9px;color:#000;">CALCULAR</span>
<span style="left:156px;top:576.84px;font-size:12px;line-height:12px;color:#000;letter-spacing:-0.15px;">Elementos</span>
<span style="left:226px;top:576.84px;font-size:12px;line-height:12px;color:#000;letter-spacing:-0.15px;">Verificación</span>
<div style="left:131px;top:594px;width:1px;height:412px;background:#ecece6;"></div>
<div style="left:149px;top:594px;width:1px;height:412px;background:#ecece6;"></div>
<div style="left:220px;top:594px;width:1px;height:412px;background:#ecece6;"></div>
<div style="left:73px;top:596px;width:54px;height:16px;border:1px solid #000;border-radius:2px;background:linear-gradient(#d4d4d4,#bcbcbc 70%,#909090);box-shadow:inset -1px -1px 0 #555, inset 1px 1px 0 #f0f0f0;"></div>
<span style="left:70.0px;width:60px;text-align:center;top:598.69px;font-size:11px;line-height:11px;color:#000;letter-spacing:-0.2px;">Consultar</span>
<svg style="left:133px;top:596px" width="17" height="16" viewBox="0 0 17 16"><rect width="17" height="16" fill="#c2c2c2"/><path d="M5 15.8 L17 4.3 V10.5 L11 15.8Z" fill="#7c7c7c"/><path d="M4.6 15.6 L16.6 3.6" stroke="#000" stroke-width="1.1" fill="none"/><path d="M1.2 7.6 L3.9 13.4 L16 1.6" stroke="#04ee04" stroke-width="3" fill="none" stroke-linejoin="miter"/></svg>
<span style="left:156px;top:598.84px;font-size:12px;line-height:12px;color:#000;letter-spacing:0.1px;">Módulo 1</span>
<span style="left:226px;top:598.84px;font-size:12px;line-height:12px;color:#000;letter-spacing:-0.22px;">EL Hundimiento d...</span>
<div style="left:73px;top:615px;width:54px;height:16px;border:1px solid #000;border-radius:2px;background:linear-gradient(#d4d4d4,#bcbcbc 70%,#909090);box-shadow:inset -1px -1px 0 #555, inset 1px 1px 0 #f0f0f0;"></div>
<span style="left:70.0px;width:60px;text-align:center;top:617.69px;font-size:11px;line-height:11px;color:#000;letter-spacing:-0.2px;">Consultar</span>
<svg style="left:133px;top:615px" width="17" height="16" viewBox="0 0 17 16"><rect width="17" height="16" fill="#c2c2c2"/><path d="M5 15.8 L17 4.3 V10.5 L11 15.8Z" fill="#7c7c7c"/><path d="M4.6 15.6 L16.6 3.6" stroke="#000" stroke-width="1.1" fill="none"/><path d="M1.2 7.6 L3.9 13.4 L16 1.6" stroke="#04ee04" stroke-width="3" fill="none" stroke-linejoin="miter"/></svg>
<span style="left:156px;top:617.84px;font-size:12px;line-height:12px;color:#000;letter-spacing:0.1px;">Módulo 1</span>
<span style="left:226px;top:617.84px;font-size:12px;line-height:12px;color:#000;letter-spacing:-0.22px;">EL Rotura por flexi...</span>
<div style="left:73px;top:634px;width:54px;height:16px;border:1px solid #000;border-radius:2px;background:linear-gradient(#d4d4d4,#bcbcbc 70%,#909090);box-shadow:inset -1px -1px 0 #555, inset 1px 1px 0 #f0f0f0;"></div>
<span style="left:70.0px;width:60px;text-align:center;top:636.69px;font-size:11px;line-height:11px;color:#000;letter-spacing:-0.2px;">Consultar</span>
<svg style="left:133px;top:634px" width="17" height="16" viewBox="0 0 17 16"><rect width="17" height="16" fill="#c2c2c2"/><path d="M5 15.8 L17 4.3 V10.5 L11 15.8Z" fill="#7c7c7c"/><path d="M4.6 15.6 L16.6 3.6" stroke="#000" stroke-width="1.1" fill="none"/><path d="M1.2 7.6 L3.9 13.4 L16 1.6" stroke="#04ee04" stroke-width="3" fill="none" stroke-linejoin="miter"/></svg>
<span style="left:156px;top:636.84px;font-size:12px;line-height:12px;color:#000;letter-spacing:0.1px;">Módulo 1</span>
<span style="left:226px;top:636.84px;font-size:12px;line-height:12px;color:#000;letter-spacing:-0.22px;">EL Fisuración</span>
<div style="left:73px;top:653px;width:54px;height:16px;border:1px solid #000;border-radius:2px;background:linear-gradient(#d4d4d4,#bcbcbc 70%,#909090);box-shadow:inset -1px -1px 0 #555, inset 1px 1px 0 #f0f0f0;"></div>
<span style="left:70.0px;width:60px;text-align:center;top:655.69px;font-size:11px;line-height:11px;color:#000;letter-spacing:-0.2px;">Consultar</span>
<svg style="left:133px;top:653px" width="17" height="16" viewBox="0 0 17 16"><rect width="17" height="16" fill="#c2c2c2"/><path d="M5 15.8 L17 4.3 V10.5 L11 15.8Z" fill="#7c7c7c"/><path d="M4.6 15.6 L16.6 3.6" stroke="#000" stroke-width="1.1" fill="none"/><path d="M1.2 7.6 L3.9 13.4 L16 1.6" stroke="#04ee04" stroke-width="3" fill="none" stroke-linejoin="miter"/></svg>
<span style="left:156px;top:655.84px;font-size:12px;line-height:12px;color:#000;letter-spacing:0.1px;">Módulo 1</span>
<span style="left:226px;top:655.84px;font-size:12px;line-height:12px;color:#000;letter-spacing:-0.22px;">EL Rotura por cort...</span>
<div style="left:73px;top:672px;width:54px;height:16px;border:1px solid #000;border-radius:2px;background:linear-gradient(#d4d4d4,#bcbcbc 70%,#909090);box-shadow:inset -1px -1px 0 #555, inset 1px 1px 0 #f0f0f0;"></div>
<span style="left:70.0px;width:60px;text-align:center;top:674.69px;font-size:11px;line-height:11px;color:#000;letter-spacing:-0.2px;">Consultar</span>
<svg style="left:133px;top:672px" width="17" height="16" viewBox="0 0 17 16"><rect width="17" height="16" fill="#c2c2c2"/><path d="M5 15.8 L17 4.3 V10.5 L11 15.8Z" fill="#7c7c7c"/><path d="M4.6 15.6 L16.6 3.6" stroke="#000" stroke-width="1.1" fill="none"/><path d="M1.2 7.6 L3.9 13.4 L16 1.6" stroke="#04ee04" stroke-width="3" fill="none" stroke-linejoin="miter"/></svg>
<span style="left:156px;top:674.84px;font-size:12px;line-height:12px;color:#000;letter-spacing:0.1px;">Módulo 1</span>
<span style="left:226px;top:674.84px;font-size:12px;line-height:12px;color:#000;letter-spacing:-0.22px;">Generación del ar...</span>
<div style="left:73px;top:691px;width:54px;height:16px;border:1px solid #000;border-radius:2px;background:linear-gradient(#d4d4d4,#bcbcbc 70%,#909090);box-shadow:inset -1px -1px 0 #555, inset 1px 1px 0 #f0f0f0;"></div>
<span style="left:70.0px;width:60px;text-align:center;top:693.69px;font-size:11px;line-height:11px;color:#000;letter-spacing:-0.2px;">Consultar</span>
<svg style="left:133px;top:691px" width="17" height="16" viewBox="0 0 17 16"><rect width="17" height="16" fill="#c2c2c2"/><path d="M5 15.8 L17 4.3 V10.5 L11 15.8Z" fill="#7c7c7c"/><path d="M4.6 15.6 L16.6 3.6" stroke="#000" stroke-width="1.1" fill="none"/><path d="M1.2 7.6 L3.9 13.4 L16 1.6" stroke="#04ee04" stroke-width="3" fill="none" stroke-linejoin="miter"/></svg>
<span style="left:156px;top:693.84px;font-size:12px;line-height:12px;color:#000;letter-spacing:0.1px;">Módulo 2</span>
<span style="left:226px;top:693.84px;font-size:12px;line-height:12px;color:#000;letter-spacing:-0.22px;">EL Hundimiento d...</span>
<div style="left:73px;top:710px;width:54px;height:16px;border:1px solid #000;border-radius:2px;background:linear-gradient(#d4d4d4,#bcbcbc 70%,#909090);box-shadow:inset -1px -1px 0 #555, inset 1px 1px 0 #f0f0f0;"></div>
<span style="left:70.0px;width:60px;text-align:center;top:712.69px;font-size:11px;line-height:11px;color:#000;letter-spacing:-0.2px;">Consultar</span>
<svg style="left:133px;top:710px" width="17" height="16" viewBox="0 0 17 16"><rect width="17" height="16" fill="#c2c2c2"/><path d="M5 15.8 L17 4.3 V10.5 L11 15.8Z" fill="#7c7c7c"/><path d="M4.6 15.6 L16.6 3.6" stroke="#000" stroke-width="1.1" fill="none"/><path d="M1.2 7.6 L3.9 13.4 L16 1.6" stroke="#04ee04" stroke-width="3" fill="none" stroke-linejoin="miter"/></svg>
<span style="left:156px;top:712.84px;font-size:12px;line-height:12px;color:#000;letter-spacing:0.1px;">Módulo 2</span>
<span style="left:226px;top:712.84px;font-size:12px;line-height:12px;color:#000;letter-spacing:-0.22px;">EL Rotura por flexi...</span>
<div style="left:73px;top:729px;width:54px;height:16px;border:1px solid #000;border-radius:2px;background:linear-gradient(#d4d4d4,#bcbcbc 70%,#909090);box-shadow:inset -1px -1px 0 #555, inset 1px 1px 0 #f0f0f0;"></div>
<span style="left:70.0px;width:60px;text-align:center;top:731.69px;font-size:11px;line-height:11px;color:#000;letter-spacing:-0.2px;">Consultar</span>
<svg style="left:133px;top:729px" width="17" height="16" viewBox="0 0 17 16"><rect width="17" height="16" fill="#c2c2c2"/><path d="M5 15.8 L17 4.3 V10.5 L11 15.8Z" fill="#7c7c7c"/><path d="M4.6 15.6 L16.6 3.6" stroke="#000" stroke-width="1.1" fill="none"/><path d="M1.2 7.6 L3.9 13.4 L16 1.6" stroke="#04ee04" stroke-width="3" fill="none" stroke-linejoin="miter"/></svg>
<span style="left:156px;top:731.84px;font-size:12px;line-height:12px;color:#000;letter-spacing:0.1px;">Módulo 2</span>
<span style="left:226px;top:731.84px;font-size:12px;line-height:12px;color:#000;letter-spacing:-0.22px;">EL Fisuración</span>
<div style="left:73px;top:748px;width:54px;height:16px;border:1px solid #000;border-radius:2px;background:linear-gradient(#d4d4d4,#bcbcbc 70%,#909090);box-shadow:inset -1px -1px 0 #555, inset 1px 1px 0 #f0f0f0;"></div>
<span style="left:70.0px;width:60px;text-align:center;top:750.69px;font-size:11px;line-height:11px;color:#000;letter-spacing:-0.2px;">Consultar</span>
<svg style="left:133px;top:748px" width="17" height="16" viewBox="0 0 17 16"><rect width="17" height="16" fill="#c2c2c2"/><path d="M5 15.8 L17 4.3 V10.5 L11 15.8Z" fill="#7c7c7c"/><path d="M4.6 15.6 L16.6 3.6" stroke="#000" stroke-width="1.1" fill="none"/><path d="M1.2 7.6 L3.9 13.4 L16 1.6" stroke="#04ee04" stroke-width="3" fill="none" stroke-linejoin="miter"/></svg>
<span style="left:156px;top:750.84px;font-size:12px;line-height:12px;color:#000;letter-spacing:0.1px;">Módulo 2</span>
<span style="left:226px;top:750.84px;font-size:12px;line-height:12px;color:#000;letter-spacing:-0.22px;">EL Rotura por cort...</span>
<div style="left:73px;top:767px;width:54px;height:16px;border:1px solid #000;border-radius:2px;background:linear-gradient(#d4d4d4,#bcbcbc 70%,#909090);box-shadow:inset -1px -1px 0 #555, inset 1px 1px 0 #f0f0f0;"></div>
<span style="left:70.0px;width:60px;text-align:center;top:769.69px;font-size:11px;line-height:11px;color:#000;letter-spacing:-0.2px;">Consultar</span>
<svg style="left:133px;top:767px" width="17" height="16" viewBox="0 0 17 16"><rect width="17" height="16" fill="#c2c2c2"/><path d="M5 15.8 L17 4.3 V10.5 L11 15.8Z" fill="#7c7c7c"/><path d="M4.6 15.6 L16.6 3.6" stroke="#000" stroke-width="1.1" fill="none"/><path d="M1.2 7.6 L3.9 13.4 L16 1.6" stroke="#04ee04" stroke-width="3" fill="none" stroke-linejoin="miter"/></svg>
<span style="left:156px;top:769.84px;font-size:12px;line-height:12px;color:#000;letter-spacing:0.1px;">Módulo 2</span>
<span style="left:226px;top:769.84px;font-size:12px;line-height:12px;color:#000;letter-spacing:-0.22px;">Generación del ar...</span>
<div style="left:73px;top:786px;width:54px;height:16px;border:1px solid #000;border-radius:2px;background:linear-gradient(#d4d4d4,#bcbcbc 70%,#909090);box-shadow:inset -1px -1px 0 #555, inset 1px 1px 0 #f0f0f0;"></div>
<span style="left:70.0px;width:60px;text-align:center;top:788.69px;font-size:11px;line-height:11px;color:#000;letter-spacing:-0.2px;">Consultar</span>
<svg style="left:133px;top:786px" width="17" height="16" viewBox="0 0 17 16"><rect width="17" height="16" fill="#c2c2c2"/><path d="M5 15.8 L17 4.3 V10.5 L11 15.8Z" fill="#7c7c7c"/><path d="M4.6 15.6 L16.6 3.6" stroke="#000" stroke-width="1.1" fill="none"/><path d="M1.2 7.6 L3.9 13.4 L16 1.6" stroke="#04ee04" stroke-width="3" fill="none" stroke-linejoin="miter"/></svg>
<span style="left:156px;top:788.84px;font-size:12px;line-height:12px;color:#000;letter-spacing:-0.3px;">Aleta 1</span>
<span style="left:226px;top:788.84px;font-size:12px;line-height:12px;color:#000;letter-spacing:-0.22px;">EL Hundimiento d...</span>
<div style="left:73px;top:805px;width:54px;height:16px;border:1px solid #000;border-radius:2px;background:linear-gradient(#d4d4d4,#bcbcbc 70%,#909090);box-shadow:inset -1px -1px 0 #555, inset 1px 1px 0 #f0f0f0;"></div>
<span style="left:70.0px;width:60px;text-align:center;top:807.69px;font-size:11px;line-height:11px;color:#000;letter-spacing:-0.2px;">Consultar</span>
<svg style="left:133px;top:805px" width="17" height="16" viewBox="0 0 17 16"><rect width="17" height="16" fill="#c2c2c2"/><path d="M5 15.8 L17 4.3 V10.5 L11 15.8Z" fill="#7c7c7c"/><path d="M4.6 15.6 L16.6 3.6" stroke="#000" stroke-width="1.1" fill="none"/><path d="M1.2 7.6 L3.9 13.4 L16 1.6" stroke="#04ee04" stroke-width="3" fill="none" stroke-linejoin="miter"/></svg>
<span style="left:156px;top:807.84px;font-size:12px;line-height:12px;color:#000;letter-spacing:-0.3px;">Aleta 1</span>
<span style="left:226px;top:807.84px;font-size:12px;line-height:12px;color:#000;letter-spacing:-0.22px;">EL Rotura por flexi...</span>
<div style="left:73px;top:824px;width:54px;height:16px;border:1px solid #000;border-radius:2px;background:linear-gradient(#d4d4d4,#bcbcbc 70%,#909090);box-shadow:inset -1px -1px 0 #555, inset 1px 1px 0 #f0f0f0;"></div>
<span style="left:70.0px;width:60px;text-align:center;top:826.69px;font-size:11px;line-height:11px;color:#000;letter-spacing:-0.2px;">Consultar</span>
<svg style="left:133px;top:824px" width="17" height="16" viewBox="0 0 17 16"><rect width="17" height="16" fill="#c2c2c2"/><path d="M5 15.8 L17 4.3 V10.5 L11 15.8Z" fill="#7c7c7c"/><path d="M4.6 15.6 L16.6 3.6" stroke="#000" stroke-width="1.1" fill="none"/><path d="M1.2 7.6 L3.9 13.4 L16 1.6" stroke="#04ee04" stroke-width="3" fill="none" stroke-linejoin="miter"/></svg>
<span style="left:156px;top:826.84px;font-size:12px;line-height:12px;color:#000;letter-spacing:-0.3px;">Aleta 1</span>
<span style="left:226px;top:826.84px;font-size:12px;line-height:12px;color:#000;letter-spacing:-0.22px;">EL Fisuración</span>
<div style="left:73px;top:843px;width:54px;height:16px;border:1px solid #000;border-radius:2px;background:linear-gradient(#d4d4d4,#bcbcbc 70%,#909090);box-shadow:inset -1px -1px 0 #555, inset 1px 1px 0 #f0f0f0;"></div>
<span style="left:70.0px;width:60px;text-align:center;top:845.69px;font-size:11px;line-height:11px;color:#000;letter-spacing:-0.2px;">Consultar</span>
<svg style="left:133px;top:843px" width="17" height="16" viewBox="0 0 17 16"><rect width="17" height="16" fill="#c2c2c2"/><path d="M5 15.8 L17 4.3 V10.5 L11 15.8Z" fill="#7c7c7c"/><path d="M4.6 15.6 L16.6 3.6" stroke="#000" stroke-width="1.1" fill="none"/><path d="M1.2 7.6 L3.9 13.4 L16 1.6" stroke="#04ee04" stroke-width="3" fill="none" stroke-linejoin="miter"/></svg>
<span style="left:156px;top:845.84px;font-size:12px;line-height:12px;color:#000;letter-spacing:-0.3px;">Aleta 1</span>
<span style="left:226px;top:845.84px;font-size:12px;line-height:12px;color:#000;letter-spacing:-0.22px;">EL Rotura por cort...</span>
<div style="left:73px;top:862px;width:54px;height:16px;border:1px solid #000;border-radius:2px;background:linear-gradient(#d4d4d4,#bcbcbc 70%,#909090);box-shadow:inset -1px -1px 0 #555, inset 1px 1px 0 #f0f0f0;"></div>
<span style="left:70.0px;width:60px;text-align:center;top:864.69px;font-size:11px;line-height:11px;color:#000;letter-spacing:-0.2px;">Consultar</span>
<svg style="left:133px;top:862px" width="17" height="16" viewBox="0 0 17 16"><rect width="17" height="16" fill="#c2c2c2"/><path d="M5 15.8 L17 4.3 V10.5 L11 15.8Z" fill="#7c7c7c"/><path d="M4.6 15.6 L16.6 3.6" stroke="#000" stroke-width="1.1" fill="none"/><path d="M1.2 7.6 L3.9 13.4 L16 1.6" stroke="#04ee04" stroke-width="3" fill="none" stroke-linejoin="miter"/></svg>
<span style="left:156px;top:864.84px;font-size:12px;line-height:12px;color:#000;letter-spacing:-0.3px;">Aleta 1</span>
<span style="left:226px;top:864.84px;font-size:12px;line-height:12px;color:#000;letter-spacing:-0.22px;">Generación del ar...</span>
<div style="left:73px;top:881px;width:54px;height:16px;border:1px solid #000;border-radius:2px;background:linear-gradient(#d4d4d4,#bcbcbc 70%,#909090);box-shadow:inset -1px -1px 0 #555, inset 1px 1px 0 #f0f0f0;"></div>
<span style="left:70.0px;width:60px;text-align:center;top:883.69px;font-size:11px;line-height:11px;color:#000;letter-spacing:-0.2px;">Consultar</span>
<svg style="left:133px;top:881px" width="17" height="16" viewBox="0 0 17 16"><rect width="17" height="16" fill="#c2c2c2"/><path d="M5 15.8 L17 4.3 V10.5 L11 15.8Z" fill="#7c7c7c"/><path d="M4.6 15.6 L16.6 3.6" stroke="#000" stroke-width="1.1" fill="none"/><path d="M1.2 7.6 L3.9 13.4 L16 1.6" stroke="#04ee04" stroke-width="3" fill="none" stroke-linejoin="miter"/></svg>
<span style="left:156px;top:883.84px;font-size:12px;line-height:12px;color:#000;letter-spacing:-0.3px;">Aleta 2</span>
<span style="left:226px;top:883.84px;font-size:12px;line-height:12px;color:#000;letter-spacing:-0.22px;">EL Hundimiento d...</span>
<div style="left:73px;top:900px;width:54px;height:16px;border:1px solid #000;border-radius:2px;background:linear-gradient(#d4d4d4,#bcbcbc 70%,#909090);box-shadow:inset -1px -1px 0 #555, inset 1px 1px 0 #f0f0f0;"></div>
<span style="left:70.0px;width:60px;text-align:center;top:902.69px;font-size:11px;line-height:11px;color:#000;letter-spacing:-0.2px;">Consultar</span>
<svg style="left:133px;top:900px" width="17" height="16" viewBox="0 0 17 16"><rect width="17" height="16" fill="#c2c2c2"/><path d="M5 15.8 L17 4.3 V10.5 L11 15.8Z" fill="#7c7c7c"/><path d="M4.6 15.6 L16.6 3.6" stroke="#000" stroke-width="1.1" fill="none"/><path d="M1.2 7.6 L3.9 13.4 L16 1.6" stroke="#04ee04" stroke-width="3" fill="none" stroke-linejoin="miter"/></svg>
<span style="left:156px;top:902.84px;font-size:12px;line-height:12px;color:#000;letter-spacing:-0.3px;">Aleta 2</span>
<span style="left:226px;top:902.84px;font-size:12px;line-height:12px;color:#000;letter-spacing:-0.22px;">EL Rotura por flexi...</span>
<div style="left:73px;top:919px;width:54px;height:16px;border:1px solid #000;border-radius:2px;background:linear-gradient(#d4d4d4,#bcbcbc 70%,#909090);box-shadow:inset -1px -1px 0 #555, inset 1px 1px 0 #f0f0f0;"></div>
<span style="left:70.0px;width:60px;text-align:center;top:921.69px;font-size:11px;line-height:11px;color:#000;letter-spacing:-0.2px;">Consultar</span>
<svg style="left:133px;top:919px" width="17" height="16" viewBox="0 0 17 16"><rect width="17" height="16" fill="#c2c2c2"/><path d="M5 15.8 L17 4.3 V10.5 L11 15.8Z" fill="#7c7c7c"/><path d="M4.6 15.6 L16.6 3.6" stroke="#000" stroke-width="1.1" fill="none"/><path d="M1.2 7.6 L3.9 13.4 L16 1.6" stroke="#04ee04" stroke-width="3" fill="none" stroke-linejoin="miter"/></svg>
<span style="left:156px;top:921.84px;font-size:12px;line-height:12px;color:#000;letter-spacing:-0.3px;">Aleta 2</span>
<span style="left:226px;top:921.84px;font-size:12px;line-height:12px;color:#000;letter-spacing:-0.22px;">EL Fisuración</span>
<div style="left:73px;top:938px;width:54px;height:16px;border:1px solid #000;border-radius:2px;background:linear-gradient(#d4d4d4,#bcbcbc 70%,#909090);box-shadow:inset -1px -1px 0 #555, inset 1px 1px 0 #f0f0f0;"></div>
<span style="left:70.0px;width:60px;text-align:center;top:940.69px;font-size:11px;line-height:11px;color:#000;letter-spacing:-0.2px;">Consultar</span>
<svg style="left:133px;top:938px" width="17" height="16" viewBox="0 0 17 16"><rect width="17" height="16" fill="#c2c2c2"/><path d="M5 15.8 L17 4.3 V10.5 L11 15.8Z" fill="#7c7c7c"/><path d="M4.6 15.6 L16.6 3.6" stroke="#000" stroke-width="1.1" fill="none"/><path d="M1.2 7.6 L3.9 13.4 L16 1.6" stroke="#04ee04" stroke-width="3" fill="none" stroke-linejoin="miter"/></svg>
<span style="left:156px;top:940.84px;font-size:12px;line-height:12px;color:#000;letter-spacing:-0.3px;">Aleta 2</span>
<span style="left:226px;top:940.84px;font-size:12px;line-height:12px;color:#000;letter-spacing:-0.22px;">EL Rotura por cort...</span>
<div style="left:73px;top:957px;width:54px;height:16px;border:1px solid #000;border-radius:2px;background:linear-gradient(#d4d4d4,#bcbcbc 70%,#909090);box-shadow:inset -1px -1px 0 #555, inset 1px 1px 0 #f0f0f0;"></div>
<span style="left:70.0px;width:60px;text-align:center;top:959.69px;font-size:11px;line-height:11px;color:#000;letter-spacing:-0.2px;">Consultar</span>
<svg style="left:133px;top:957px" width="17" height="16" viewBox="0 0 17 16"><rect width="17" height="16" fill="#c2c2c2"/><path d="M5 15.8 L17 4.3 V10.5 L11 15.8Z" fill="#7c7c7c"/><path d="M4.6 15.6 L16.6 3.6" stroke="#000" stroke-width="1.1" fill="none"/><path d="M1.2 7.6 L3.9 13.4 L16 1.6" stroke="#04ee04" stroke-width="3" fill="none" stroke-linejoin="miter"/></svg>
<span style="left:156px;top:959.84px;font-size:12px;line-height:12px;color:#000;letter-spacing:-0.3px;">Aleta 2</span>
<span style="left:226px;top:959.84px;font-size:12px;line-height:12px;color:#000;letter-spacing:-0.22px;">Generación del ar...</span>
<div style="left:65px;top:975px;width:272px;height:31px;background:#fff;"></div>
<div style="left:131px;top:975px;width:1px;height:31px;background:#ededed;"></div>
<div style="left:149px;top:975px;width:1px;height:31px;background:#ededed;"></div>
<div style="left:220px;top:975px;width:1px;height:31px;background:#ededed;"></div>
<div style="left:65px;top:613px;width:272px;height:1px;background:#efefe8;"></div>
<div style="left:65px;top:632px;width:272px;height:1px;background:#efefe8;"></div>
<div style="left:65px;top:651px;width:272px;height:1px;background:#efefe8;"></div>
<div style="left:65px;top:670px;width:272px;height:1px;background:#efefe8;"></div>
<div style="left:65px;top:689px;width:272px;height:1px;background:#efefe8;"></div>
<div style="left:65px;top:708px;width:272px;height:1px;background:#efefe8;"></div>
<div style="left:65px;top:727px;width:272px;height:1px;background:#efefe8;"></div>
<div style="left:65px;top:746px;width:272px;height:1px;background:#efefe8;"></div>
<div style="left:65px;top:765px;width:272px;height:1px;background:#efefe8;"></div>
<div style="left:65px;top:784px;width:272px;height:1px;background:#efefe8;"></div>
<div style="left:65px;top:803px;width:272px;height:1px;background:#efefe8;"></div>
<div style="left:65px;top:822px;width:272px;height:1px;background:#efefe8;"></div>
<div style="left:65px;top:841px;width:272px;height:1px;background:#efefe8;"></div>
<div style="left:65px;top:860px;width:272px;height:1px;background:#efefe8;"></div>
<div style="left:65px;top:879px;width:272px;height:1px;background:#efefe8;"></div>
<div style="left:65px;top:898px;width:272px;height:1px;background:#efefe8;"></div>
<div style="left:65px;top:917px;width:272px;height:1px;background:#efefe8;"></div>
<div style="left:65px;top:936px;width:272px;height:1px;background:#efefe8;"></div>
<div style="left:65px;top:955px;width:272px;height:1px;background:#efefe8;"></div>
<div style="left:65px;top:974px;width:272px;height:1px;background:#efefe8;"></div>
<div style="left:65px;top:993px;width:272px;height:1px;background:#efefe8;"></div>
<div style="left:65px;top:1012px;width:272px;height:1px;background:#efefe8;"></div>
<div style="left:65px;top:1006px;width:272px;height:17px;background:#f0f0f0;"></div>
<div style="left:81px;top:1007px;width:239px;height:15px;background:#cdcdcd;"></div>
<svg style="left:0;top:0" width="1" height="1"><path d="M74.75 1011.0 L71.25 1014.5 L74.75 1018.0" stroke="#606060" stroke-width="2" fill="none"/></svg>
<svg style="left:0;top:0" width="1" height="1"><path d="M327.75 1011.0 L331.25 1014.5 L327.75 1018.0" stroke="#606060" stroke-width="2" fill="none"/></svg>
<div style="left:65px;top:1023px;width:274px;height:3px;background:#f8f8f8;"></div>
<div style="left:346px;top:31px;width:526px;height:996px;background:#fff;"></div>
<div style="left:346px;top:31px;width:526px;height:2px;background:linear-gradient(#a0a0a0,#696969);"></div>
<div style="left:346px;top:31px;width:2px;height:996px;background:linear-gradient(90deg,#a0a0a0,#696969);"></div>
<div style="left:871px;top:34px;width:2px;height:993px;background:#f4f4f4;"></div>
<div style="left:349px;top:1026px;width:523px;height:1px;background:#e3e3e3;"></div>
<div style="left:53px;top:1029px;width:820px;height:18px;background:#f0f0f0;"></div>
<div style="left:344px;top:1030px;width:1px;height:16px;background:#d0d0d0;"></div>
<div style="left:345px;top:1030px;width:1px;height:16px;background:#fff;"></div>
<div style="left:622px;top:1030px;width:1px;height:16px;background:#d0d0d0;"></div>
<div style="left:623px;top:1030px;width:1px;height:16px;background:#fff;"></div>
<span style="left:70.5px;top:1033.34px;font-size:12px;line-height:12px;color:#000;letter-spacing:-0.35px;">Unidades: S.I.</span>
<span style="left:349.3px;top:1033.34px;font-size:12px;line-height:12px;color:#000;letter-spacing:-0.25px;">Despiece :  Sistema Métrico Europeo</span>
<span style="left:628px;top:1033.34px;font-size:12px;line-height:12px;color:#000;letter-spacing:-0.3px;">Normas americanas  AASHTO 2010</span>
<div style="left:869px;top:1037px;width:1.5px;height:1.5px;background:#b0b0b0;"></div>
<div style="left:867px;top:1039px;width:1.5px;height:1.5px;background:#b0b0b0;"></div>
<div style="left:869px;top:1039px;width:1.5px;height:1.5px;background:#b0b0b0;"></div>
<div style="left:865px;top:1041px;width:1.5px;height:1.5px;background:#b0b0b0;"></div>
<div style="left:867px;top:1041px;width:1.5px;height:1.5px;background:#b0b0b0;"></div>
<div style="left:869px;top:1041px;width:1.5px;height:1.5px;background:#b0b0b0;"></div>
<div style="left:60px;top:1047px;width:813px;height:23px;background:#f4f5f7;"></div>
<div style="left:60px;top:1047px;width:100px;height:23px;background:#f0f0f0;"></div>
<div style="left:60px;top:1070px;width:813px;height:1px;background:#a8a8a8;"></div>
<div style="left:60px;top:1071px;width:813px;height:1px;background:#fdfdfd;"></div>
<div style="left:61px;top:1049px;width:5px;height:20px;background:#f8f8f8;"></div>
<div style="left:63px;top:1051px;width:1.5px;height:1.5px;background:#c0c0c0;"></div>
<div style="left:63px;top:1055px;width:1.5px;height:1.5px;background:#c0c0c0;"></div>
<div style="left:63px;top:1059px;width:1.5px;height:1.5px;background:#c0c0c0;"></div>
<div style="left:63px;top:1063px;width:1.5px;height:1.5px;background:#c0c0c0;"></div>
<div style="left:63px;top:1067px;width:1.5px;height:1.5px;background:#c0c0c0;"></div>
<div style="left:159px;top:1049px;width:1px;height:21px;background:#a8a8a8;"></div>
<svg style="left:70.5px;top:1051px" width="14" height="13.5" viewBox="0 0 15 14" preserveAspectRatio="none"><rect x=".6" y=".6" width="13.8" height="12.8" fill="#fff" stroke="#000" stroke-width="1.2"/><path d="M0 10.5 H15" stroke="#000" stroke-width="1.2"/><path d="M4.5 1 V10" stroke="#e00" stroke-width="1.2"/><path d="M7 4 H9.5 V2.5 L12.5 5.5 L9.5 8.5 V7 H7Z" fill="#18d818" stroke="#000" stroke-width=".8"/></svg>
<svg style="left:93.5px;top:1051px" width="14" height="13.5" viewBox="0 0 15 14" preserveAspectRatio="none"><rect x=".6" y=".6" width="13.8" height="12.8" fill="#fff" stroke="#000" stroke-width="1.2"/><path d="M0 10.5 H15" stroke="#000" stroke-width="1.2"/><path d="M4.5 1 V10" stroke="#e00" stroke-width="1.2"/><path d="M12.5 4 H10 V2.5 L7 5.5 L10 8.5 V7 H12.5Z" fill="#18d818" stroke="#000" stroke-width=".8"/></svg>
<svg style="left:116.5px;top:1051px" width="14" height="13.5" viewBox="0 0 15 14" preserveAspectRatio="none"><rect x=".6" y=".6" width="13.8" height="12.8" fill="#fff" stroke="#000" stroke-width="1.2"/><path d="M7.5 1 V5" stroke="#000" stroke-width="1"/><path d="M1 5.5 H14" stroke="#e00" stroke-width="1.2"/><path d="M6 6.5 H9 V8.5 H11 L7.5 12 L4 8.5 H6Z" fill="#18d818" stroke="#000" stroke-width=".8"/></svg>
<svg style="left:139.5px;top:1051px" width="14" height="13.5" viewBox="0 0 15 14" preserveAspectRatio="none"><rect x=".6" y=".6" width="13.8" height="12.8" fill="#fff" stroke="#000" stroke-width="1.2"/><path d="M7.5 1 V5" stroke="#000" stroke-width="1"/><path d="M1 5.5 H14" stroke="#e00" stroke-width="1.2"/><path d="M6 12.5 H9 V10.5 H11 L7.5 7 L4 10.5 H6Z" fill="#18d818" stroke="#000" stroke-width=".8"/></svg>
<svg style="left:0;top:0px" width="880" height="380" viewBox="0 0 880 380"><g fill="#e9e9e9" stroke="#000" stroke-width="1" stroke-linejoin="miter"><polygon points="473.6,54.4 433.3,87.4 480.5,144.5 492,135.6 492,123.5 529.7,123.5"/><polygon points="467.5,271.3 410.3,318.3 443.7,358 520.8,295.5 475.5,295.5 476.7,282.5"/></g><g stroke="#000" stroke-width="1" fill="none"><path d="M451.1 73.8 L491.9 123.5 M445.6 78.8 L491.1 132.6"/><path d="M421.7 329.2 L475.8 285 M425 334.2 L475 295"/></g><polygon points="491.90,123.5 847.30,123.5 831.30,295.0 475.90,295.0" fill="#e9e9e9"/><polygon points="491.90,123.5 499.60,123.5 483.60,295.0 475.90,295.0" fill="#8d8d9f"/><polygon points="839.40,123.5 847.30,123.5 831.30,295.0 823.40,295.0" fill="#8d8d9f"/><polygon points="530.10,123.5 536.40,123.5 520.40,295.0 514.10,295.0" fill="#fae296"/><polygon points="536.40,123.5 540.60,123.5 524.60,295.0 520.40,295.0" fill="#f6f6f6"/><polygon points="540.60,123.5 586.40,123.5 570.40,295.0 524.60,295.0" fill="#d2d2d2"/><polygon points="586.90,123.5 591.40,123.5 575.40,295.0 570.90,295.0" fill="#eeeeee"/><polygon points="592.60,123.5 638.40,123.5 622.40,295.0 576.60,295.0" fill="#d2d2d2"/><polygon points="638.90,123.5 643.40,123.5 627.40,295.0 622.90,295.0" fill="#eeeeee"/><polygon points="644.60,123.5 690.40,123.5 674.40,295.0 628.60,295.0" fill="#d2d2d2"/><polygon points="690.90,123.5 695.40,123.5 679.40,295.0 674.90,295.0" fill="#eeeeee"/><polygon points="696.60,123.5 742.40,123.5 726.40,295.0 680.60,295.0" fill="#d2d2d2"/><polygon points="742.90,123.5 747.40,123.5 731.40,295.0 726.90,295.0" fill="#eeeeee"/><polygon points="748.60,123.5 794.40,123.5 778.40,295.0 732.60,295.0" fill="#d2d2d2"/><polygon points="794.90,123.5 799.40,123.5 783.40,295.0 778.90,295.0" fill="#eeeeee"/><g shape-rendering="crispEdges"><line x1="538.20" y1="123.5" x2="522.20" y2="295.0" stroke="#000" stroke-width="1"/><line x1="540.60" y1="123.5" x2="524.60" y2="295.0" stroke="#000" stroke-width="1"/><line x1="586.20" y1="123.5" x2="570.20" y2="295.0" stroke="#000" stroke-width="1"/><line x1="592.20" y1="123.5" x2="576.20" y2="295.0" stroke="#000" stroke-width="1"/><line x1="638.20" y1="123.5" x2="622.20" y2="295.0" stroke="#000" stroke-width="1"/><line x1="644.20" y1="123.5" x2="628.20" y2="295.0" stroke="#000" stroke-width="1"/><line x1="690.20" y1="123.5" x2="674.20" y2="295.0" stroke="#000" stroke-width="1"/><line x1="696.20" y1="123.5" x2="680.20" y2="295.0" stroke="#000" stroke-width="1"/><line x1="742.20" y1="123.5" x2="726.20" y2="295.0" stroke="#000" stroke-width="1"/><line x1="748.20" y1="123.5" x2="732.20" y2="295.0" stroke="#000" stroke-width="1"/><line x1="794.20" y1="123.5" x2="778.20" y2="295.0" stroke="#000" stroke-width="1"/></g><polygon points="803.20,123.5 809.60,123.5 793.60,295.0 787.20,295.0" fill="#fae296"/><g shape-rendering="crispEdges"><line x1="803.20" y1="123.5" x2="787.20" y2="295.0" stroke="#000" stroke-width="1"/><line x1="499.60" y1="123.5" x2="483.60" y2="295.0" stroke="#000" stroke-width="1"/><line x1="839.40" y1="123.5" x2="823.40" y2="295.0" stroke="#000" stroke-width="1"/></g><g shape-rendering="crispEdges"><line x1="490.8" y1="135.4" x2="846.2" y2="135.4" stroke="#fff" stroke-width="2"/><line x1="490.8" y1="135.4" x2="846.2" y2="135.4" stroke="#000" stroke-width="2" stroke-dasharray="30 5"/><line x1="489.6" y1="147.7" x2="845.0" y2="147.7" stroke="#fff" stroke-width="2"/><line x1="489.6" y1="147.7" x2="845.0" y2="147.7" stroke="#000" stroke-width="2" stroke-dasharray="30 5"/><line x1="478.2" y1="270.5" x2="833.6" y2="270.5" stroke="#fff" stroke-width="1"/><line x1="478.2" y1="269.5" x2="833.6" y2="269.5" stroke="#fff" stroke-width="1"/><line x1="478.2" y1="271.5" x2="833.6" y2="271.5" stroke="#fff" stroke-width="1"/><line x1="478.2" y1="269.5" x2="833.6" y2="269.5" stroke="#000" stroke-width="1" stroke-dasharray="29 6"/><line x1="478.2" y1="271.5" x2="833.6" y2="271.5" stroke="#000" stroke-width="1" stroke-dasharray="29 6"/><line x1="477.1" y1="282.5" x2="832.5" y2="282.5" stroke="#fff" stroke-width="1"/><line x1="477.1" y1="281.5" x2="832.5" y2="281.5" stroke="#fff" stroke-width="1"/><line x1="477.1" y1="283.5" x2="832.5" y2="283.5" stroke="#fff" stroke-width="1"/><line x1="477.1" y1="281.5" x2="832.5" y2="281.5" stroke="#000" stroke-width="1" stroke-dasharray="29 6"/><line x1="477.1" y1="283.5" x2="832.5" y2="283.5" stroke="#000" stroke-width="1" stroke-dasharray="29 6"/></g><polygon points="491.9,123.5 847.3,123.5 831.3,295.0 475.9,295.0" fill="none" stroke="#000" stroke-width="1"/><line x1="475.9" y1="295.0" x2="831.3" y2="295.0" stroke="#000" stroke-width="2"/><text font-family="Liberation Sans, sans-serif" font-size="14" letter-spacing="-0.75" text-anchor="middle" fill="#000" transform="translate(556.3,209) rotate(-84.7)" xml:space="preserve">Carril  1</text><text font-family="Liberation Sans, sans-serif" font-size="14" letter-spacing="-0.75" text-anchor="middle" fill="#000" transform="translate(608.3,209) rotate(-84.7)" xml:space="preserve">Carril  2</text><text font-family="Liberation Sans, sans-serif" font-size="14" letter-spacing="-0.75" text-anchor="middle" fill="#000" transform="translate(660.3,209) rotate(-84.7)" xml:space="preserve">Carril  3</text><text font-family="Liberation Sans, sans-serif" font-size="14" letter-spacing="-0.75" text-anchor="middle" fill="#000" transform="translate(712.3,209) rotate(-84.7)" xml:space="preserve">Carril  4</text><text font-family="Liberation Sans, sans-serif" font-size="14" letter-spacing="-0.75" text-anchor="middle" fill="#000" transform="translate(764.3,209) rotate(-84.7)" xml:space="preserve">Carril  5</text><text font-family="Liberation Sans, sans-serif" font-size="14" letter-spacing="-0.75" text-anchor="middle" fill="#000" transform="translate(526.5,208) rotate(-84.7)">0.37 kN/m²</text><text font-family="Liberation Sans, sans-serif" font-size="14" letter-spacing="-0.75" text-anchor="middle" fill="#000" transform="translate(800.5,208) rotate(-84.7)">0.37 kN/m²</text><g stroke="#ff0000" stroke-width="1" shape-rendering="crispEdges"><line x1="499.6" y1="62" x2="469.5" y2="355.2"/><line x1="506.4" y1="62" x2="477.2" y2="355.2"/><line x1="514.4" y1="62" x2="484.5" y2="355.2"/><line x1="536.5" y1="62" x2="506.7" y2="355.2"/><line x1="816.7" y1="62" x2="787.5" y2="355.2"/><line x1="839.4" y1="62" x2="809.5" y2="355.2"/><line x1="846.6" y1="62" x2="816.4" y2="355.2"/><line x1="853.6" y1="62" x2="824.3" y2="355.2"/><line x1="457.8" y1="209.5" x2="861.6" y2="209.5" stroke-dasharray="4 3"/></g><text x="353" y="158" font-family="Liberation Sans, sans-serif" font-size="10" fill="#000">Hipótesis 1</text></svg>
<svg style="left:0;top:333.2px" width="880" height="380" viewBox="0 0 880 380"><g fill="#e9e9e9" stroke="#000" stroke-width="1" stroke-linejoin="miter"><polygon points="473.6,54.4 433.3,87.4 480.5,144.5 492,135.6 492,123.5 529.7,123.5"/><polygon points="467.5,271.3 410.3,318.3 443.7,358 520.8,295.5 475.5,295.5 476.7,282.5"/></g><g stroke="#000" stroke-width="1" fill="none"><path d="M451.1 73.8 L491.9 123.5 M445.6 78.8 L491.1 132.6"/><path d="M421.7 329.2 L475.8 285 M425 334.2 L475 295"/></g><polygon points="491.90,123.5 847.30,123.5 831.30,295.0 475.90,295.0" fill="#e9e9e9"/><polygon points="491.90,123.5 499.60,123.5 483.60,295.0 475.90,295.0" fill="#8d8d9f"/><polygon points="839.40,123.5 847.30,123.5 831.30,295.0 823.40,295.0" fill="#8d8d9f"/><polygon points="530.10,123.5 536.40,123.5 520.40,295.0 514.10,295.0" fill="#fae296"/><polygon points="536.40,123.5 546.10,123.5 530.10,295.0 520.40,295.0" fill="#f6f6f6"/><polygon points="546.10,123.5 591.90,123.5 575.90,295.0 530.10,295.0" fill="#d2d2d2"/><polygon points="592.40,123.5 596.90,123.5 580.90,295.0 576.40,295.0" fill="#eeeeee"/><polygon points="598.10,123.5 643.90,123.5 627.90,295.0 582.10,295.0" fill="#d2d2d2"/><polygon points="644.40,123.5 648.90,123.5 632.90,295.0 628.40,295.0" fill="#eeeeee"/><polygon points="650.10,123.5 695.90,123.5 679.90,295.0 634.10,295.0" fill="#d2d2d2"/><polygon points="696.40,123.5 700.90,123.5 684.90,295.0 680.40,295.0" fill="#eeeeee"/><polygon points="702.10,123.5 747.90,123.5 731.90,295.0 686.10,295.0" fill="#d2d2d2"/><polygon points="748.40,123.5 752.90,123.5 736.90,295.0 732.40,295.0" fill="#eeeeee"/><polygon points="754.10,123.5 799.90,123.5 783.90,295.0 738.10,295.0" fill="#d2d2d2"/><polygon points="800.40,123.5 804.90,123.5 788.90,295.0 784.40,295.0" fill="#eeeeee"/><g shape-rendering="crispEdges"><line x1="538.20" y1="123.5" x2="522.20" y2="295.0" stroke="#000" stroke-width="1"/><line x1="546.10" y1="123.5" x2="530.10" y2="295.0" stroke="#000" stroke-width="1"/><line x1="591.70" y1="123.5" x2="575.70" y2="295.0" stroke="#000" stroke-width="1"/><line x1="597.70" y1="123.5" x2="581.70" y2="295.0" stroke="#000" stroke-width="1"/><line x1="643.70" y1="123.5" x2="627.70" y2="295.0" stroke="#000" stroke-width="1"/><line x1="649.70" y1="123.5" x2="633.70" y2="295.0" stroke="#000" stroke-width="1"/><line x1="695.70" y1="123.5" x2="679.70" y2="295.0" stroke="#000" stroke-width="1"/><line x1="701.70" y1="123.5" x2="685.70" y2="295.0" stroke="#000" stroke-width="1"/><line x1="747.70" y1="123.5" x2="731.70" y2="295.0" stroke="#000" stroke-width="1"/><line x1="753.70" y1="123.5" x2="737.70" y2="295.0" stroke="#000" stroke-width="1"/><line x1="799.70" y1="123.5" x2="783.70" y2="295.0" stroke="#000" stroke-width="1"/></g><polygon points="803.20,123.5 809.60,123.5 793.60,295.0 787.20,295.0" fill="#fae296"/><g shape-rendering="crispEdges"><line x1="803.20" y1="123.5" x2="787.20" y2="295.0" stroke="#000" stroke-width="1"/><line x1="499.60" y1="123.5" x2="483.60" y2="295.0" stroke="#000" stroke-width="1"/><line x1="839.40" y1="123.5" x2="823.40" y2="295.0" stroke="#000" stroke-width="1"/></g><g shape-rendering="crispEdges"><line x1="490.8" y1="135.4" x2="846.2" y2="135.4" stroke="#fff" stroke-width="2"/><line x1="490.8" y1="135.4" x2="846.2" y2="135.4" stroke="#000" stroke-width="2" stroke-dasharray="30 5"/><line x1="489.6" y1="148.5" x2="845.0" y2="148.5" stroke="#fff" stroke-width="1"/><line x1="489.6" y1="147.5" x2="845.0" y2="147.5" stroke="#fff" stroke-width="1"/><line x1="489.6" y1="149.5" x2="845.0" y2="149.5" stroke="#fff" stroke-width="1"/><line x1="489.6" y1="147.5" x2="845.0" y2="147.5" stroke="#000" stroke-width="1" stroke-dasharray="29 6"/><line x1="489.6" y1="149.5" x2="845.0" y2="149.5" stroke="#000" stroke-width="1" stroke-dasharray="29 6"/><line x1="478.2" y1="270.5" x2="833.6" y2="270.5" stroke="#fff" stroke-width="1"/><line x1="478.2" y1="269.5" x2="833.6" y2="269.5" stroke="#fff" stroke-width="1"/><line x1="478.2" y1="271.5" x2="833.6" y2="271.5" stroke="#fff" stroke-width="1"/><line x1="478.2" y1="269.5" x2="833.6" y2="269.5" stroke="#000" stroke-width="1" stroke-dasharray="29 6"/><line x1="478.2" y1="271.5" x2="833.6" y2="271.5" stroke="#000" stroke-width="1" stroke-dasharray="29 6"/><line x1="477.1" y1="282.4" x2="832.5" y2="282.4" stroke="#fff" stroke-width="2"/><line x1="477.1" y1="282.4" x2="832.5" y2="282.4" stroke="#000" stroke-width="2" stroke-dasharray="30 5"/></g><polygon points="491.9,123.5 847.3,123.5 831.3,295.0 475.9,295.0" fill="none" stroke="#000" stroke-width="1"/><line x1="475.9" y1="295.0" x2="831.3" y2="295.0" stroke="#000" stroke-width="2"/><text font-family="Liberation Sans, sans-serif" font-size="14" letter-spacing="-0.75" text-anchor="middle" fill="#000" transform="translate(561.8,209) rotate(-84.7)" xml:space="preserve">Carril  1</text><text font-family="Liberation Sans, sans-serif" font-size="14" letter-spacing="-0.75" text-anchor="middle" fill="#000" transform="translate(613.8,209) rotate(-84.7)" xml:space="preserve">Carril  2</text><text font-family="Liberation Sans, sans-serif" font-size="14" letter-spacing="-0.75" text-anchor="middle" fill="#000" transform="translate(665.8,209) rotate(-84.7)" xml:space="preserve">Carril  3</text><text font-family="Liberation Sans, sans-serif" font-size="14" letter-spacing="-0.75" text-anchor="middle" fill="#000" transform="translate(717.8,209) rotate(-84.7)" xml:space="preserve">Carril  4</text><text font-family="Liberation Sans, sans-serif" font-size="14" letter-spacing="-0.75" text-anchor="middle" fill="#000" transform="translate(769.8,209) rotate(-84.7)" xml:space="preserve">Carril  5</text><text font-family="Liberation Sans, sans-serif" font-size="14" letter-spacing="-0.75" text-anchor="middle" fill="#000" transform="translate(526.5,208) rotate(-84.7)">0.37 kN/m²</text><text font-family="Liberation Sans, sans-serif" font-size="14" letter-spacing="-0.75" text-anchor="middle" fill="#000" transform="translate(800.5,208) rotate(-84.7)">0.37 kN/m²</text><g stroke="#ff0000" stroke-width="1" shape-rendering="crispEdges"><line x1="499.6" y1="62" x2="469.5" y2="355.2"/><line x1="506.4" y1="62" x2="477.2" y2="355.2"/><line x1="514.4" y1="62" x2="484.5" y2="355.2"/><line x1="536.5" y1="62" x2="506.7" y2="355.2"/><line x1="816.7" y1="62" x2="787.5" y2="355.2"/><line x1="839.4" y1="62" x2="809.5" y2="355.2"/><line x1="846.6" y1="62" x2="816.4" y2="355.2"/><line x1="853.6" y1="62" x2="824.3" y2="355.2"/><line x1="457.8" y1="209.5" x2="861.6" y2="209.5" stroke-dasharray="4 3"/></g><text x="353" y="159.6" font-family="Liberation Sans, sans-serif" font-size="10" fill="#000">Hipótesis 2</text></svg>
<svg style="left:0;top:656.3px" width="880" height="380" viewBox="0 0 880 380"><g fill="#e9e9e9" stroke="#000" stroke-width="1" stroke-linejoin="miter"><polygon points="473.6,54.4 433.3,87.4 480.5,144.5 492,135.6 492,123.5 529.7,123.5"/><polygon points="467.5,271.3 410.3,318.3 443.7,358 520.8,295.5 475.5,295.5 476.7,282.5"/></g><g stroke="#000" stroke-width="1" fill="none"><path d="M451.1 73.8 L491.9 123.5 M445.6 78.8 L491.1 132.6"/><path d="M421.7 329.2 L475.8 285 M425 334.2 L475 295"/></g><polygon points="491.90,123.5 847.30,123.5 831.30,295.0 475.90,295.0" fill="#e9e9e9"/><polygon points="491.90,123.5 499.60,123.5 483.60,295.0 475.90,295.0" fill="#8d8d9f"/><polygon points="839.40,123.5 847.30,123.5 831.30,295.0 823.40,295.0" fill="#8d8d9f"/><polygon points="530.10,123.5 536.40,123.5 520.40,295.0 514.10,295.0" fill="#fae296"/><polygon points="536.40,123.5 543.10,123.5 527.10,295.0 520.40,295.0" fill="#f6f6f6"/><polygon points="543.10,123.5 588.90,123.5 572.90,295.0 527.10,295.0" fill="#d2d2d2"/><polygon points="589.40,123.5 593.90,123.5 577.90,295.0 573.40,295.0" fill="#eeeeee"/><polygon points="595.10,123.5 640.90,123.5 624.90,295.0 579.10,295.0" fill="#d2d2d2"/><polygon points="641.40,123.5 645.90,123.5 629.90,295.0 625.40,295.0" fill="#eeeeee"/><polygon points="647.10,123.5 692.90,123.5 676.90,295.0 631.10,295.0" fill="#d2d2d2"/><polygon points="693.40,123.5 697.90,123.5 681.90,295.0 677.40,295.0" fill="#eeeeee"/><polygon points="699.10,123.5 744.90,123.5 728.90,295.0 683.10,295.0" fill="#d2d2d2"/><polygon points="745.40,123.5 749.90,123.5 733.90,295.0 729.40,295.0" fill="#eeeeee"/><polygon points="751.10,123.5 796.90,123.5 780.90,295.0 735.10,295.0" fill="#d2d2d2"/><polygon points="797.40,123.5 801.90,123.5 785.90,295.0 781.40,295.0" fill="#eeeeee"/><g shape-rendering="crispEdges"><line x1="538.20" y1="123.5" x2="522.20" y2="295.0" stroke="#000" stroke-width="1"/><line x1="543.10" y1="123.5" x2="527.10" y2="295.0" stroke="#000" stroke-width="1"/><line x1="588.70" y1="123.5" x2="572.70" y2="295.0" stroke="#000" stroke-width="1"/><line x1="594.70" y1="123.5" x2="578.70" y2="295.0" stroke="#000" stroke-width="1"/><line x1="640.70" y1="123.5" x2="624.70" y2="295.0" stroke="#000" stroke-width="1"/><line x1="646.70" y1="123.5" x2="630.70" y2="295.0" stroke="#000" stroke-width="1"/><line x1="692.70" y1="123.5" x2="676.70" y2="295.0" stroke="#000" stroke-width="1"/><line x1="698.70" y1="123.5" x2="682.70" y2="295.0" stroke="#000" stroke-width="1"/><line x1="744.70" y1="123.5" x2="728.70" y2="295.0" stroke="#000" stroke-width="1"/><line x1="750.70" y1="123.5" x2="734.70" y2="295.0" stroke="#000" stroke-width="1"/><line x1="796.70" y1="123.5" x2="780.70" y2="295.0" stroke="#000" stroke-width="1"/></g><polygon points="803.20,123.5 809.60,123.5 793.60,295.0 787.20,295.0" fill="#fae296"/><g shape-rendering="crispEdges"><line x1="803.20" y1="123.5" x2="787.20" y2="295.0" stroke="#000" stroke-width="1"/><line x1="499.60" y1="123.5" x2="483.60" y2="295.0" stroke="#000" stroke-width="1"/><line x1="839.40" y1="123.5" x2="823.40" y2="295.0" stroke="#000" stroke-width="1"/></g><g shape-rendering="crispEdges"><line x1="490.8" y1="135.5" x2="846.2" y2="135.5" stroke="#fff" stroke-width="1"/><line x1="490.8" y1="134.5" x2="846.2" y2="134.5" stroke="#fff" stroke-width="1"/><line x1="490.8" y1="136.5" x2="846.2" y2="136.5" stroke="#fff" stroke-width="1"/><line x1="490.8" y1="134.5" x2="846.2" y2="134.5" stroke="#000" stroke-width="1" stroke-dasharray="29 6"/><line x1="490.8" y1="136.5" x2="846.2" y2="136.5" stroke="#000" stroke-width="1" stroke-dasharray="29 6"/><line x1="489.6" y1="148.5" x2="845.0" y2="148.5" stroke="#fff" stroke-width="1"/><line x1="489.6" y1="147.5" x2="845.0" y2="147.5" stroke="#fff" stroke-width="1"/><line x1="489.6" y1="149.5" x2="845.0" y2="149.5" stroke="#fff" stroke-width="1"/><line x1="489.6" y1="147.5" x2="845.0" y2="147.5" stroke="#000" stroke-width="1" stroke-dasharray="29 6"/><line x1="489.6" y1="149.5" x2="845.0" y2="149.5" stroke="#000" stroke-width="1" stroke-dasharray="29 6"/><line x1="478.2" y1="270.1" x2="833.6" y2="270.1" stroke="#fff" stroke-width="2"/><line x1="478.2" y1="270.1" x2="833.6" y2="270.1" stroke="#000" stroke-width="2" stroke-dasharray="30 5"/><line x1="477.1" y1="282.4" x2="832.5" y2="282.4" stroke="#fff" stroke-width="2"/><line x1="477.1" y1="282.4" x2="832.5" y2="282.4" stroke="#000" stroke-width="2" stroke-dasharray="30 5"/></g><polygon points="491.9,123.5 847.3,123.5 831.3,295.0 475.9,295.0" fill="none" stroke="#000" stroke-width="1"/><line x1="475.9" y1="295.0" x2="831.3" y2="295.0" stroke="#000" stroke-width="2"/><text font-family="Liberation Sans, sans-serif" font-size="14" letter-spacing="-0.75" text-anchor="middle" fill="#000" transform="translate(558.8,209) rotate(-84.7)" xml:space="preserve">Carril  1</text><text font-family="Liberation Sans, sans-serif" font-size="14" letter-spacing="-0.75" text-anchor="middle" fill="#000" transform="translate(610.8,209) rotate(-84.7)" xml:space="preserve">Carril  2</text><text font-family="Liberation Sans, sans-serif" font-size="14" letter-spacing="-0.75" text-anchor="middle" fill="#000" transform="translate(662.8,209) rotate(-84.7)" xml:space="preserve">Carril  3</text><text font-family="Liberation Sans, sans-serif" font-size="14" letter-spacing="-0.75" text-anchor="middle" fill="#000" transform="translate(714.8,209) rotate(-84.7)" xml:space="preserve">Carril  4</text><text font-family="Liberation Sans, sans-serif" font-size="14" letter-spacing="-0.75" text-anchor="middle" fill="#000" transform="translate(766.8,209) rotate(-84.7)" xml:space="preserve">Carril  5</text><text font-family="Liberation Sans, sans-serif" font-size="14" letter-spacing="-0.75" text-anchor="middle" fill="#000" transform="translate(526.5,208) rotate(-84.7)">0.37 kN/m²</text><text font-family="Liberation Sans, sans-serif" font-size="14" letter-spacing="-0.75" text-anchor="middle" fill="#000" transform="translate(800.5,208) rotate(-84.7)">0.37 kN/m²</text><g stroke="#ff0000" stroke-width="1" shape-rendering="crispEdges"><line x1="499.6" y1="62" x2="469.5" y2="355.2"/><line x1="506.4" y1="62" x2="477.2" y2="355.2"/><line x1="514.4" y1="62" x2="484.5" y2="355.2"/><line x1="536.5" y1="62" x2="506.7" y2="355.2"/><line x1="816.7" y1="62" x2="787.5" y2="355.2"/><line x1="839.4" y1="62" x2="809.5" y2="355.2"/><line x1="846.6" y1="62" x2="816.4" y2="355.2"/><line x1="853.6" y1="62" x2="824.3" y2="355.2"/><line x1="457.8" y1="209.5" x2="861.6" y2="209.5" stroke-dasharray="4 3"/></g><text x="353" y="161.4" font-family="Liberation Sans, sans-serif" font-size="10" fill="#000">Hipótesis 3</text></svg>
<span style="left:1200.5px;width:400px;text-align:center;top:6.80px;font-size:15px;line-height:15px;color:#000;letter-spacing:-0.29px;">Acciones variables y accidentales</span>
<div style="left:1891px;top:0px;width:29px;height:20px;background:#c1c1c1;"></div>
<svg style="left:1902px;top:6px" width="10" height="10" viewBox="0 0 10 10"><path d="M1 1 L9 9 M9 1 L1 9" stroke="#fff" stroke-width="1.7" fill="none"/></svg>
<div style="left:892px;top:46px;width:711px;height:548px;border:1px solid #dcdcdc;"></div>
<span style="left:898.5px;top:41.99px;font-size:11px;line-height:11px;background:#f0f0f0;padding:0 3px 0 2px;letter-spacing:-0.1px">Carga de tráfico</span>
<div style="left:914px;top:62px;width:13px;height:13px;border:1px solid #707070;background:#fff;"></div>
<svg style="left:914px;top:62px" width="13" height="13" viewBox="0 0 13 13"><path d="M3 6.2 L5.3 9 L10 3.2" stroke="#000" stroke-width="1.7" fill="none"/></svg>
<span style="left:929.4px;top:64.19px;font-size:11px;line-height:11px;color:#000;letter-spacing:-0.1px;">Considerar la acción del tráfico en plataforma y aceras</span>
<div style="left:912px;top:83px;width:334px;height:19px;border:1px solid #acacac;background:linear-gradient(#f2f2f2,#ebebeb 50%,#e0e0e0);"></div>
<span style="left:879.0px;width:400px;text-align:center;top:87.79px;font-size:11px;line-height:11px;color:#000;letter-spacing:-0.1px;">Recuperar los valores de la normativa para las acciones de tráfico</span>
<div style="left:904px;top:116px;width:348px;height:352px;border:1px solid #dcdcdc;"></div>
<span style="left:910.5px;top:111.99px;font-size:11px;line-height:11px;background:#f0f0f0;padding:0 3px 0 2px;letter-spacing:-0.1px">Definición de la calzada y las aceras</span>
<span style="left:915px;top:150.89px;font-size:11px;line-height:11px;color:#000;letter-spacing:-0.1px;">Distancia, D</span>
<span style="left:974.5px;top:153.88px;font-size:9px;line-height:9px;color:#000;letter-spacing:-0.1px;">1</span>
<span style="left:979.5px;top:150.89px;font-size:11px;line-height:11px;color:#000;letter-spacing:-0.1px;">:</span>
<div style="left:994px;top:144px;width:60px;height:20px;border:1px solid #abadb3;background:#fff;"></div>
<span style="left:1000px;top:149.39px;font-size:11px;line-height:11px;color:#000;">2.5</span>
<span style="left:1059.5px;top:150.89px;font-size:11px;line-height:11px;color:#000;letter-spacing:-0.1px;">m</span>
<span style="left:1091px;top:150.89px;font-size:11px;line-height:11px;color:#000;letter-spacing:-0.1px;">Distancia, D</span>
<span style="left:1150.5px;top:153.88px;font-size:9px;line-height:9px;color:#000;letter-spacing:-0.1px;">3</span>
<span style="left:1155.5px;top:150.89px;font-size:11px;line-height:11px;color:#000;letter-spacing:-0.1px;">:</span>
<div style="left:1168px;top:144px;width:60px;height:20px;border:1px solid #abadb3;background:#fff;"></div>
<span style="left:1174px;top:149.39px;font-size:11px;line-height:11px;color:#000;">21</span>
<span style="left:1233.3px;top:150.89px;font-size:11px;line-height:11px;color:#000;letter-spacing:-0.1px;">m</span>
<span style="left:915px;top:171.79px;font-size:11px;line-height:11px;color:#000;letter-spacing:-0.1px;">Distancia, D</span>
<span style="left:974.5px;top:174.78px;font-size:9px;line-height:9px;color:#000;letter-spacing:-0.1px;">2</span>
<span style="left:979.5px;top:171.79px;font-size:11px;line-height:11px;color:#000;letter-spacing:-0.1px;">:</span>
<div style="left:994px;top:165px;width:60px;height:20px;border:1px solid #abadb3;background:#fff;"></div>
<span style="left:1000px;top:170.09px;font-size:11px;line-height:11px;color:#000;">3</span>
<span style="left:1059.5px;top:171.79px;font-size:11px;line-height:11px;color:#000;letter-spacing:-0.1px;">m</span>
<span style="left:1091px;top:171.79px;font-size:11px;line-height:11px;color:#000;letter-spacing:-0.1px;">Distancia, D</span>
<span style="left:1150.5px;top:174.78px;font-size:9px;line-height:9px;color:#000;letter-spacing:-0.1px;">4</span>
<span style="left:1155.5px;top:171.79px;font-size:11px;line-height:11px;color:#000;letter-spacing:-0.1px;">:</span>
<div style="left:1168px;top:165px;width:60px;height:20px;border:1px solid #abadb3;background:#fff;"></div>
<span style="left:1174px;top:170.09px;font-size:11px;line-height:11px;color:#000;">21.5</span>
<span style="left:1233.3px;top:171.79px;font-size:11px;line-height:11px;color:#000;letter-spacing:-0.1px;">m</span>
<div style="left:904px;top:478px;width:348px;height:64px;border:1px solid #dcdcdc;"></div>
<span style="left:910.5px;top:473.99px;font-size:11px;line-height:11px;background:#f0f0f0;padding:0 3px 0 2px;letter-spacing:-0.1px">Carriles de circulación</span>
<span style="left:1008.2px;top:494.59px;font-size:11px;line-height:11px;color:#000;letter-spacing:-0.1px;">Número de carriles:</span>
<div style="left:1138px;top:490px;width:50px;height:23px;border:1px solid #abadb3;background:#fff;"></div>
<span style="left:1143.8px;top:494.59px;font-size:11px;line-height:11px;color:#000;">5</span>
<span style="left:1010px;top:519.99px;font-size:11px;line-height:11px;color:#000;letter-spacing:-0.1px;">Anchura del carril, w</span>
<span style="left:1112px;top:522.88px;font-size:9px;line-height:9px;color:#000;letter-spacing:-0.1px;">c</span>
<span style="left:1118.5px;top:519.99px;font-size:11px;line-height:11px;color:#000;letter-spacing:-0.1px;">:</span>
<div style="left:1138px;top:514px;width:50px;height:24px;border:1px solid #abadb3;background:#fff;"></div>
<span style="left:1143.8px;top:518.59px;font-size:11px;line-height:11px;color:#000;">3.5</span>
<span style="left:1195px;top:519.99px;font-size:11px;line-height:11px;color:#000;letter-spacing:-0.1px;">m</span>
<div style="left:904px;top:550px;width:348px;height:38px;border:1px solid #dcdcdc;"></div>
<span style="left:910.5px;top:545.99px;font-size:11px;line-height:11px;background:#f0f0f0;padding:0 3px 0 2px;letter-spacing:-0.1px">Frenado</span>
<span style="left:985.3px;top:563.39px;font-size:11px;line-height:11px;color:#000;letter-spacing:-0.1px;">Fuerza de frenado por módulo:</span>
<div style="left:1138px;top:557px;width:50px;height:20px;border:1px solid #abadb3;background:#fff;"></div>
<span style="left:1143.8px;top:562.49px;font-size:11px;line-height:11px;color:#000;">0</span>
<span style="left:1195px;top:563.39px;font-size:11px;line-height:11px;color:#000;letter-spacing:-0.1px;">kN</span>
<svg style="left:0;top:0" width="0" height="0"><defs>
<pattern id="sand" width="8" height="8" patternUnits="userSpaceOnUse"><rect width="8" height="8" fill="#e3cfba"/><rect x="0" y="0" width="1" height="1" fill="#e3cfba"/><rect x="1" y="0" width="1" height="1" fill="#dcc3a9"/><rect x="2" y="0" width="1" height="1" fill="#ead9c8"/><rect x="3" y="0" width="1" height="1" fill="#d6b99c"/><rect x="4" y="0" width="1" height="1" fill="#ead9c8"/><rect x="5" y="0" width="1" height="1" fill="#e3cfba"/><rect x="6" y="0" width="1" height="1" fill="#d6b99c"/><rect x="7" y="0" width="1" height="1" fill="#e3cfba"/><rect x="0" y="1" width="1" height="1" fill="#d6b99c"/><rect x="1" y="1" width="1" height="1" fill="#e3cfba"/><rect x="2" y="1" width="1" height="1" fill="#d6b99c"/><rect x="3" y="1" width="1" height="1" fill="#d6b99c"/><rect x="4" y="1" width="1" height="1" fill="#e3cfba"/><rect x="5" y="1" width="1" height="1" fill="#f1e6da"/><rect x="6" y="1" width="1" height="1" fill="#dcc3a9"/><rect x="7" y="1" width="1" height="1" fill="#dcc3a9"/><rect x="0" y="2" width="1" height="1" fill="#ead9c8"/><rect x="1" y="2" width="1" height="1" fill="#faf5ef"/><rect x="2" y="2" width="1" height="1" fill="#ead9c8"/><rect x="3" y="2" width="1" height="1" fill="#e3cfba"/><rect x="4" y="2" width="1" height="1" fill="#cda988"/><rect x="5" y="2" width="1" height="1" fill="#d6b99c"/><rect x="6" y="2" width="1" height="1" fill="#f1e6da"/><rect x="7" y="2" width="1" height="1" fill="#dcc3a9"/><rect x="0" y="3" width="1" height="1" fill="#dcc3a9"/><rect x="1" y="3" width="1" height="1" fill="#dcc3a9"/><rect x="2" y="3" width="1" height="1" fill="#e3cfba"/><rect x="3" y="3" width="1" height="1" fill="#f1e6da"/><rect x="4" y="3" width="1" height="1" fill="#dcc3a9"/><rect x="5" y="3" width="1" height="1" fill="#ead9c8"/><rect x="6" y="3" width="1" height="1" fill="#ead9c8"/><rect x="7" y="3" width="1" height="1" fill="#e3cfba"/><rect x="0" y="4" width="1" height="1" fill="#ead9c8"/><rect x="1" y="4" width="1" height="1" fill="#d6b99c"/><rect x="2" y="4" width="1" height="1" fill="#d6b99c"/><rect x="3" y="4" width="1" height="1" fill="#dcc3a9"/><rect x="4" y="4" width="1" height="1" fill="#ead9c8"/><rect x="5" y="4" width="1" height="1" fill="#e3cfba"/><rect x="6" y="4" width="1" height="1" fill="#e3cfba"/><rect x="7" y="4" width="1" height="1" fill="#ead9c8"/><rect x="0" y="5" width="1" height="1" fill="#e3cfba"/><rect x="1" y="5" width="1" height="1" fill="#e3cfba"/><rect x="2" y="5" width="1" height="1" fill="#f1e6da"/><rect x="3" y="5" width="1" height="1" fill="#ead9c8"/><rect x="4" y="5" width="1" height="1" fill="#dcc3a9"/><rect x="5" y="5" width="1" height="1" fill="#ead9c8"/><rect x="6" y="5" width="1" height="1" fill="#ead9c8"/><rect x="7" y="5" width="1" height="1" fill="#f1e6da"/><rect x="0" y="6" width="1" height="1" fill="#ead9c8"/><rect x="1" y="6" width="1" height="1" fill="#dcc3a9"/><rect x="2" y="6" width="1" height="1" fill="#cda988"/><rect x="3" y="6" width="1" height="1" fill="#dcc3a9"/><rect x="4" y="6" width="1" height="1" fill="#e3cfba"/><rect x="5" y="6" width="1" height="1" fill="#f1e6da"/><rect x="6" y="6" width="1" height="1" fill="#dcc3a9"/><rect x="7" y="6" width="1" height="1" fill="#e3cfba"/><rect x="0" y="7" width="1" height="1" fill="#d6b99c"/><rect x="1" y="7" width="1" height="1" fill="#ead9c8"/><rect x="2" y="7" width="1" height="1" fill="#f1e6da"/><rect x="3" y="7" width="1" height="1" fill="#ead9c8"/><rect x="4" y="7" width="1" height="1" fill="#f1e6da"/><rect x="5" y="7" width="1" height="1" fill="#e3cfba"/><rect x="6" y="7" width="1" height="1" fill="#ead9c8"/><rect x="7" y="7" width="1" height="1" fill="#ead9c8"/></pattern>
<pattern id="conc" width="16" height="12" patternUnits="userSpaceOnUse"><rect width="16" height="12" fill="#b9b9b9"/><rect x="14" y="1" width="1" height="1" fill="#5a5a5a"/><rect x="8" y="7" width="1" height="1" fill="#5a5a5a"/><rect x="1" y="11" width="1" height="1" fill="#808080"/><rect x="14" y="4" width="1" height="1" fill="#4a4a4a"/><rect x="11" y="0" width="1" height="1" fill="#4a4a4a"/><rect x="11" y="2" width="1" height="1" fill="#5a5a5a"/><rect x="15" y="0" width="1" height="1" fill="#6e6e6e"/><rect x="9" y="2" width="1" height="1" fill="#a2a2a2"/><rect x="7" y="6" width="1" height="1" fill="#a2a2a2"/><rect x="12" y="7" width="1" height="1" fill="#a2a2a2"/><rect x="2" y="2" width="1" height="1" fill="#a2a2a2"/></pattern>
</defs></svg>
<div style="left:922px;top:201px;width:312px;height:253px;background:#fff;border-top:1px solid #8f8f8f;border-left:1px solid #8f8f8f;"></div>
<svg style="left:0;top:0" width="1260" height="460" viewBox="0 0 1260 460"><g stroke="#ff4a4a" stroke-width="1" fill="none" shape-rendering="crispEdges"><path d="M970.5 212 V283 M970.5 216.5 H1162.5 M970.5 235.5 H1143.5 M970.5 253.5 H1028.5 M970.5 272.5 H1008.5 M1008.5 287.5 H1162.5"/><path d="M1162.5 212 V233 M1143.5 231 V251 M1028.5 249 V270 M1008.5 268 V298 M1028.5 283 V298 M1143.5 283 V298 M1162.5 283 V298"/></g><path d="M968.0 219.0 L973.0 214.0" stroke="#ff2020" stroke-width="1"/><path d="M1160.0 219.0 L1165.0 214.0" stroke="#ff2020" stroke-width="1"/><path d="M968.0 238.0 L973.0 233.0" stroke="#ff2020" stroke-width="1"/><path d="M1141.0 238.0 L1146.0 233.0" stroke="#ff2020" stroke-width="1"/><path d="M968.0 256.0 L973.0 251.0" stroke="#ff2020" stroke-width="1"/><path d="M1026.0 256.0 L1031.0 251.0" stroke="#ff2020" stroke-width="1"/><path d="M968.0 275.0 L973.0 270.0" stroke="#ff2020" stroke-width="1"/><path d="M1006.0 275.0 L1011.0 270.0" stroke="#ff2020" stroke-width="1"/><path d="M1006.0 290.0 L1011.0 285.0" stroke="#ff2020" stroke-width="1"/><path d="M1026.0 290.0 L1031.0 285.0" stroke="#ff2020" stroke-width="1"/><path d="M1141.0 290.0 L1146.0 285.0" stroke="#ff2020" stroke-width="1"/><path d="M1160.0 290.0 L1165.0 285.0" stroke="#ff2020" stroke-width="1"/><text x="1061" y="213.5" font-family="DejaVu Sans, Liberation Sans, sans-serif" font-weight="bold" fill="#000" font-size="9.5" text-anchor="middle">D<tspan dx="1.5" dy="2.5" font-size="7">4</tspan></text><text x="1052.5" y="232" font-family="DejaVu Sans, Liberation Sans, sans-serif" font-weight="bold" fill="#000" font-size="9.5" text-anchor="middle">D<tspan dx="1.5" dy="2.5" font-size="7">3</tspan></text><text x="996" y="250" font-family="DejaVu Sans, Liberation Sans, sans-serif" font-weight="bold" fill="#000" font-size="9.5" text-anchor="middle">D<tspan dx="1.5" dy="2.5" font-size="7">2</tspan></text><text x="989" y="268.5" font-family="DejaVu Sans, Liberation Sans, sans-serif" font-weight="bold" fill="#000" font-size="9.5" text-anchor="middle">D<tspan dx="1.5" dy="2.5" font-size="7">1</tspan></text><text x="1016" y="283.5" font-family="DejaVu Sans, Liberation Sans, sans-serif" font-weight="bold" fill="#000" font-size="9.5" text-anchor="middle">A<tspan dx="1.5" dy="2.5" font-size="7.5">I</tspan></text><text x="1085.5" y="283.5" font-family="DejaVu Sans, Liberation Sans, sans-serif" font-weight="bold" fill="#000" font-size="9" text-anchor="middle" letter-spacing="-0.2">PLATAFORMA</text><text x="1151" y="283.5" font-family="DejaVu Sans, Liberation Sans, sans-serif" font-weight="bold" fill="#000" font-size="9.5" text-anchor="middle">A<tspan dx="1.5" dy="2.5" font-size="7.5">D</tspan></text><polygon points="995.5,317.5 1175.5,317.5 1204,336.5 977.5,330" fill="url(#sand)"/><polygon points="1002.5,313.5 1169,313.5 1175.5,317.8 995.5,317.8" fill="#4f4f4f"/><rect x="1008.5" y="309.5" width="20" height="4.5" fill="#111"/><rect x="1143.5" y="309.5" width="19.5" height="4.5" fill="#111"/><path d="M995.5 317.5 L977.5 330 L1204 336.5 L1175.5 317.5" stroke="#333" stroke-width="1" fill="none"/><polygon points="970.5,323.5 977.5,323.5 977.5,330 1204,336.5 1204,329.5 1210.5,329.5 1210.5,345.7 970.5,339.8" fill="url(#conc)" stroke="#555" stroke-width=".8"/><path d="M970.5 339.8 V392 M1210.5 345.7 V397" stroke="#8a8a8a" stroke-width="1"/><polygon points="932,381.5 1230,387.5 1230,391.5 932,386" fill="url(#sand)"/><path d="M932 381.3 L1230 387.5" stroke="#222" stroke-width="1" stroke-dasharray="38 4"/><polygon points="970.5,391.7 1210.5,396.8 1210.5,419.5 1199,419.5 1191,405.5 991.5,400.3 983.5,415 970.5,415" fill="url(#conc)" stroke="#555" stroke-width=".8"/><path d="M991.5 401.3 L1191 406.5" stroke="#fff" stroke-width="1"/><text x="970.7" y="432.4" font-family="DejaVu Sans, Liberation Sans, sans-serif" font-weight="bold" fill="#000" font-size="8.3">A<tspan dx="1" dy="2.5" font-size="7">I</tspan><tspan dx="4" dy="-2.5" font-size="8.3">= Acera Izquierda</tspan></text><text x="970.7" y="446.1" font-family="DejaVu Sans, Liberation Sans, sans-serif" font-weight="bold" fill="#000" font-size="8.3">A<tspan dx="1" dy="2.5" font-size="7">D</tspan><tspan dx="2" dy="-2.5" font-size="8.3">= Acera Derecha</tspan></text></svg>
<div style="left:1256px;top:57px;width:336px;height:252px;border:1px solid #dcdcdc;"></div>
<span style="left:1262.5px;top:52.99px;font-size:11px;line-height:11px;background:#f0f0f0;padding:0 3px 0 2px;letter-spacing:-0.1px">Vehículo de diseño</span>
<div style="left:1274px;top:84px;width:306px;height:97px;background:#c0c0c0;border:1px solid #646464;"></div>
<div style="left:1275px;top:85px;width:32px;height:16px;background:#a9c4e9;border-right:1px solid #8caedb;border-bottom:1px solid #8caedb;"></div>
<svg style="left:1296px;top:90px" width="9" height="9"><path d="M9 0 V9 H0Z" fill="#d3e0f3"/></svg>
<div style="left:1307px;top:85px;width:173px;height:16px;background:linear-gradient(#fbdca6,#f9c979 50%,#f4b552);border-right:1px solid #e8a040;border-bottom:1px solid #e8a040;"></div>
<span style="left:1192.3px;width:400px;text-align:center;top:88.49px;font-size:11px;line-height:11px;color:#000;letter-spacing:-0.1px;">Vehículos</span>
<div style="left:1480px;top:85px;width:84px;height:16px;background:linear-gradient(#ecf2fb,#dde7f6 50%,#cfdcf0);border-right:1px solid #a9bfe0;border-bottom:1px solid #a9bfe0;"></div>
<div style="left:1275px;top:101px;width:32px;height:16px;background:#fbd48c;border-bottom:1px solid #f0a030;border-right:1px solid #f0a030;"></div>
<span style="left:1090.8px;width:400px;text-align:center;top:104.49px;font-size:11px;line-height:11px;color:#000;">1</span>
<div style="left:1307px;top:101px;width:173px;height:16px;background:#fff;border-right:1px solid #c0c0c0;border-bottom:1px solid #c0c0c0;"></div>
<span style="left:1309.6px;top:103.39px;font-size:11px;line-height:11px;color:#000;letter-spacing:-0.1px;">Tandem de diseño</span>
<div style="left:1463px;top:102px;width:16px;height:14px;background:linear-gradient(#f2f2f2,#dcdcdc);border:1px solid #b8b8b8;"></div>
<svg style="left:1463px;top:102px" width="16" height="14"><path d="M5.0 6.5 L8.0 9.5 L11.0 6.5" stroke="#404040" stroke-width="1.5" fill="none"/></svg>
<div style="left:1480px;top:101px;width:84px;height:16px;background:#fff;border-right:1px solid #c0c0c0;border-bottom:1px solid #c0c0c0;"></div>
<div style="left:1481.5px;top:103px;width:81px;height:12px;border:1px solid #b5b5b5;background:linear-gradient(#f4f4f4,#e2e2e2);"></div>
<span style="left:1321.5px;width:400px;text-align:center;top:103.39px;font-size:11px;line-height:11px;color:#000;letter-spacing:-0.1px;">Editar</span>
<div style="left:1275px;top:117px;width:32px;height:16px;background:#e4ecf7;border-bottom:1px solid #9ebde7;border-right:1px solid #9ebde7;"></div>
<span style="left:1090.8px;width:400px;text-align:center;top:120.49px;font-size:11px;line-height:11px;color:#000;">2</span>
<div style="left:1307px;top:117px;width:173px;height:16px;background:#fff;border-right:1px solid #c0c0c0;border-bottom:1px solid #c0c0c0;"></div>
<span style="left:1309.6px;top:119.39px;font-size:11px;line-height:11px;color:#000;letter-spacing:-0.1px;">Camión de diseño (14" + 30")</span>
<div style="left:1463px;top:118px;width:16px;height:14px;background:linear-gradient(#f2f2f2,#dcdcdc);border:1px solid #b8b8b8;"></div>
<svg style="left:1463px;top:118px" width="16" height="14"><path d="M5.0 6.5 L8.0 9.5 L11.0 6.5" stroke="#404040" stroke-width="1.5" fill="none"/></svg>
<div style="left:1480px;top:117px;width:84px;height:16px;background:#fff;border-right:1px solid #c0c0c0;border-bottom:1px solid #c0c0c0;"></div>
<div style="left:1481.5px;top:119px;width:81px;height:12px;border:1px solid #b5b5b5;background:linear-gradient(#f4f4f4,#e2e2e2);"></div>
<span style="left:1321.5px;width:400px;text-align:center;top:119.39px;font-size:11px;line-height:11px;color:#000;letter-spacing:-0.1px;">Editar</span>
<div style="left:1275px;top:133px;width:32px;height:16px;background:#e4ecf7;border-bottom:1px solid #9ebde7;border-right:1px solid #9ebde7;"></div>
<span style="left:1090.8px;width:400px;text-align:center;top:136.49px;font-size:11px;line-height:11px;color:#000;">3</span>
<div style="left:1307px;top:133px;width:173px;height:16px;background:#fff;border-right:1px solid #c0c0c0;border-bottom:1px solid #c0c0c0;"></div>
<span style="left:1309.6px;top:135.39px;font-size:11px;line-height:11px;color:#000;letter-spacing:-0.1px;">Camión de diseño (14" + 14")</span>
<div style="left:1463px;top:134px;width:16px;height:14px;background:linear-gradient(#f2f2f2,#dcdcdc);border:1px solid #b8b8b8;"></div>
<svg style="left:1463px;top:134px" width="16" height="14"><path d="M5.0 6.5 L8.0 9.5 L11.0 6.5" stroke="#404040" stroke-width="1.5" fill="none"/></svg>
<div style="left:1480px;top:133px;width:84px;height:16px;background:#fff;border-right:1px solid #c0c0c0;border-bottom:1px solid #c0c0c0;"></div>
<div style="left:1481.5px;top:135px;width:81px;height:12px;border:1px solid #b5b5b5;background:linear-gradient(#f4f4f4,#e2e2e2);"></div>
<span style="left:1321.5px;width:400px;text-align:center;top:135.39px;font-size:11px;line-height:11px;color:#000;letter-spacing:-0.1px;">Editar</span>
<div style="left:1307px;top:100px;width:174px;height:17px;border:2px solid #000;"></div>
<div style="left:1275px;top:189px;width:94px;height:21px;border:1px solid #acacac;background:linear-gradient(#f2f2f2,#ebebeb 50%,#e0e0e0);"></div>
<span style="left:1122.0px;width:400px;text-align:center;top:194.69px;font-size:11px;line-height:11px;color:#000;letter-spacing:-0.1px;">Añadir hipótesis</span>
<div style="left:1373px;top:189px;width:94px;height:21px;border:1px solid #acacac;background:linear-gradient(#f2f2f2,#ebebeb 50%,#e0e0e0);"></div>
<span style="left:1220.0px;width:400px;text-align:center;top:194.69px;font-size:11px;line-height:11px;color:#000;letter-spacing:-0.1px;">Eliminar hipóteis</span>
<div style="left:1476px;top:189px;width:103px;height:21px;border:1px solid #acacac;background:linear-gradient(#f2f2f2,#ebebeb 50%,#e0e0e0);"></div>
<span style="left:1327.5px;width:400px;text-align:center;top:194.69px;font-size:11px;line-height:11px;color:#000;letter-spacing:-0.1px;">Crear vehículo</span>
<span style="left:1282.2px;top:229.59px;font-size:11px;line-height:11px;color:#000;letter-spacing:-0.17px;">Número de posiciones en cada carril :</span>
<div style="left:1463px;top:225px;width:50px;height:20px;border:1px solid #abadb3;background:#fff;"></div>
<span style="left:1468.8px;top:229.59px;font-size:11px;line-height:11px;color:#000;">5</span>
<span style="left:1282.2px;top:249.69px;font-size:11px;line-height:11px;color:#000;letter-spacing:-0.1px;">Incremento por carga dinámica IM:</span>
<div style="left:1463px;top:245px;width:50px;height:20px;border:1px solid #abadb3;background:#fff;"></div>
<span style="left:1468.8px;top:249.39px;font-size:11px;line-height:11px;color:#000;">33</span>
<span style="left:1522.5px;top:250.19px;font-size:11px;line-height:11px;color:#000;letter-spacing:-0.1px;">%</span>
<div style="left:1282px;top:276px;width:13px;height:13px;border:1px solid #707070;background:#fff;"></div>
<svg style="left:1282px;top:276px" width="13" height="13" viewBox="0 0 13 13"><path d="M3 6.2 L5.3 9 L10 3.2" stroke="#000" stroke-width="1.7" fill="none"/></svg>
<span style="left:1298.3px;top:277.09px;font-size:11px;line-height:11px;color:#000;letter-spacing:-0.1px;">Aplicar reducción por profundidad mínima de la cubierta de</span>
<span style="left:1298.3px;top:289.99px;font-size:11px;line-height:11px;color:#000;letter-spacing:-0.1px;">tierra sobre la estructura</span>
<div style="left:1256px;top:322px;width:336px;height:109px;border:1px solid #dcdcdc;"></div>
<span style="left:1262.5px;top:317.99px;font-size:11px;line-height:11px;background:#f0f0f0;padding:0 3px 0 2px;letter-spacing:-0.1px">Factor de presencia múltiple</span>
<div style="left:1358px;top:337px;width:222px;height:83px;background:#fff;border:1px solid #646464;"></div>
<div style="left:1359px;top:338px;width:54px;height:20px;background:#a9c4e9;border-right:1px solid #8caedb;border-bottom:1px solid #8caedb;"></div>
<svg style="left:1402px;top:347px" width="9" height="9"><path d="M9 0 V9 H0Z" fill="#d3e0f3"/></svg>
<div style="left:1413px;top:338px;width:103px;height:20px;background:linear-gradient(#fbdca6,#f9c979 50%,#f4b552);border-right:1px solid #e8a040;border-bottom:1px solid #e8a040;"></div>
<span style="left:1415.1px;top:342.29px;font-size:11px;line-height:11px;color:#000;letter-spacing:-0.1px;">Nº carriles cargados</span>
<div style="left:1516px;top:338px;width:63px;height:20px;background:linear-gradient(#ecf2fb,#dde7f6 50%,#cfdcf0);border-right:1px solid #a9bfe0;border-bottom:1px solid #a9bfe0;"></div>
<span style="left:1346.0px;width:400px;text-align:center;top:342.29px;font-size:11px;line-height:11px;color:#000;letter-spacing:-0.1px;">Factor</span>
<div style="left:1359px;top:358.0px;width:54px;height:15.25px;background:#fbd48c;border-bottom:1px solid #f0a030;border-right:1px solid #f0a030;"></div>
<span style="left:1185.0px;width:400px;text-align:center;top:361.09px;font-size:11px;line-height:11px;color:#000;">1</span>
<div style="left:1413px;top:358.0px;width:103px;height:15.25px;border-right:1px solid #c0c0c0;border-bottom:1px solid #c0c0c0;background:#fff;"></div>
<span style="left:1415.6px;top:359.69px;font-size:11px;line-height:11px;color:#000;letter-spacing:-0.1px;">1</span>
<div style="left:1516px;top:358.0px;width:63px;height:15.25px;border-right:1px solid #c0c0c0;border-bottom:1px solid #c0c0c0;background:#fff;"></div>
<span style="right:344.5999999999999px;top:359.69px;font-size:11px;line-height:11px;color:#000;">1.200</span>
<div style="left:1359px;top:373.25px;width:54px;height:15.25px;background:#e4ecf7;border-bottom:1px solid #9ebde7;border-right:1px solid #9ebde7;"></div>
<span style="left:1185.0px;width:400px;text-align:center;top:376.34px;font-size:11px;line-height:11px;color:#000;">2</span>
<div style="left:1413px;top:373.25px;width:103px;height:15.25px;border-right:1px solid #c0c0c0;border-bottom:1px solid #c0c0c0;background:#fff;"></div>
<span style="left:1415.6px;top:374.94px;font-size:11px;line-height:11px;color:#000;letter-spacing:-0.1px;">2</span>
<div style="left:1516px;top:373.25px;width:63px;height:15.25px;border-right:1px solid #c0c0c0;border-bottom:1px solid #c0c0c0;background:#fff;"></div>
<span style="right:344.5999999999999px;top:374.94px;font-size:11px;line-height:11px;color:#000;">1.000</span>
<div style="left:1359px;top:388.5px;width:54px;height:15.25px;background:#e4ecf7;border-bottom:1px solid #9ebde7;border-right:1px solid #9ebde7;"></div>
<span style="left:1185.0px;width:400px;text-align:center;top:391.59px;font-size:11px;line-height:11px;color:#000;">3</span>
<div style="left:1413px;top:388.5px;width:103px;height:15.25px;border-right:1px solid #c0c0c0;border-bottom:1px solid #c0c0c0;background:#fff;"></div>
<span style="left:1415.6px;top:390.19px;font-size:11px;line-height:11px;color:#000;letter-spacing:-0.1px;">3</span>
<div style="left:1516px;top:388.5px;width:63px;height:15.25px;border-right:1px solid #c0c0c0;border-bottom:1px solid #c0c0c0;background:#fff;"></div>
<span style="right:344.5999999999999px;top:390.19px;font-size:11px;line-height:11px;color:#000;">0.850</span>
<div style="left:1359px;top:403.75px;width:54px;height:15.25px;background:#e4ecf7;border-bottom:1px solid #9ebde7;border-right:1px solid #9ebde7;"></div>
<span style="left:1185.0px;width:400px;text-align:center;top:406.84px;font-size:11px;line-height:11px;color:#000;">4</span>
<div style="left:1413px;top:403.75px;width:103px;height:15.25px;border-right:1px solid #c0c0c0;border-bottom:1px solid #c0c0c0;background:#fff;"></div>
<span style="left:1415.6px;top:405.44px;font-size:11px;line-height:11px;color:#000;letter-spacing:-0.1px;">>3</span>
<div style="left:1516px;top:403.75px;width:63px;height:15.25px;border-right:1px solid #c0c0c0;border-bottom:1px solid #c0c0c0;background:#fff;"></div>
<span style="right:344.5999999999999px;top:405.44px;font-size:11px;line-height:11px;color:#000;">0.650</span>
<div style="left:1413px;top:357px;width:104px;height:17px;border:2px solid #000;"></div>
<div style="left:1258px;top:437px;width:336px;height:151px;border:1px solid #dcdcdc;"></div>
<span style="left:1264.5px;top:432.99px;font-size:11px;line-height:11px;background:#f0f0f0;padding:0 3px 0 2px;letter-spacing:-0.1px">Sobrecargas</span>
<div style="left:1268px;top:453px;width:316px;height:61px;border:1px solid #dcdcdc;"></div>
<span style="left:1274.5px;top:448.99px;font-size:11px;line-height:11px;background:#f0f0f0;padding:0 3px 0 2px;letter-spacing:-0.1px">Carga uniforme en el carril de diseño</span>
<span style="left:1293.5px;top:473.89px;font-size:11px;line-height:11px;color:#000;letter-spacing:-0.1px;">Carga lineal en carril de diseño :</span>
<div style="left:1474px;top:469px;width:50px;height:20px;border:1px solid #abadb3;background:#fff;"></div>
<span style="left:1479.5px;top:473.89px;font-size:11px;line-height:11px;color:#000;">9.34007</span>
<span style="left:1538px;top:473.89px;font-size:11px;line-height:11px;color:#000;letter-spacing:-0.1px;">kN/m</span>
<span style="left:1293.5px;top:493.99px;font-size:11px;line-height:11px;color:#000;letter-spacing:-0.1px;">Anchura de aplicación de la carga :</span>
<div style="left:1474px;top:490px;width:50px;height:20px;border:1px solid #abadb3;background:#fff;"></div>
<span style="left:1479.5px;top:494.49px;font-size:11px;line-height:11px;color:#000;">3.04801</span>
<span style="left:1536px;top:493.99px;font-size:11px;line-height:11px;color:#000;letter-spacing:-0.1px;">m</span>
<div style="left:1268px;top:525px;width:316px;height:56px;border:1px solid #dcdcdc;"></div>
<span style="left:1274.5px;top:520.99px;font-size:11px;line-height:11px;background:#f0f0f0;padding:0 3px 0 2px;letter-spacing:-0.1px">Carga peatonal en aceras</span>
<span style="left:1293.5px;top:540.39px;font-size:11px;line-height:11px;color:#000;letter-spacing:-0.1px;">Sobrecarga en la  acera izquierda:</span>
<div style="left:1474px;top:535px;width:50px;height:20px;border:1px solid #abadb3;background:#fff;"></div>
<span style="left:1479.5px;top:539.69px;font-size:11px;line-height:11px;color:#000;">3.591</span>
<span style="left:1538px;top:540.39px;font-size:11px;line-height:11px;color:#000;letter-spacing:-0.1px;">kN/m</span>
<span style="left:1563px;top:540.07px;font-size:7px;line-height:7px;color:#000;">2</span>
<span style="left:1293.5px;top:558.39px;font-size:11px;line-height:11px;color:#000;letter-spacing:-0.1px;">Sobrecarga en la acera derecha:</span>
<div style="left:1474px;top:555px;width:50px;height:20px;border:1px solid #abadb3;background:#fff;"></div>
<span style="left:1479.5px;top:559.29px;font-size:11px;line-height:11px;color:#000;">3.591</span>
<span style="left:1538px;top:559.19px;font-size:11px;line-height:11px;color:#000;letter-spacing:-0.1px;">kN/m</span>
<span style="left:1563px;top:558.87px;font-size:7px;line-height:7px;color:#000;">2</span>
<div style="left:1604px;top:46px;width:306px;height:72px;border:1px solid #dcdcdc;"></div>
<span style="left:1610.5px;top:41.99px;font-size:11px;line-height:11px;background:#f0f0f0;padding:0 3px 0 2px;letter-spacing:-0.1px">Sobrecarga de tráfico en trasdós</span>
<span style="left:1614.9px;top:72.59px;font-size:11px;line-height:11px;color:#000;letter-spacing:-0.1px;">Altura equivalente de tierras :</span>
<div style="left:1765px;top:69px;width:44px;height:20px;border:1px solid #abadb3;background:#fff;overflow:hidden;"><span style="left:4.5px;top:3.7px;font-size:11px;line-height:11px">0.60960</span></div>
<span style="left:1817.9px;top:72.59px;font-size:11px;line-height:11px;color:#000;letter-spacing:-0.1px;">m</span>
<div style="left:1833px;top:90px;width:73px;height:21px;border:1px solid #acacac;background:linear-gradient(#f2f2f2,#ebebeb 50%,#e0e0e0);"></div>
<span style="left:1669.5px;width:400px;text-align:center;top:95.39px;font-size:11px;line-height:11px;color:#000;letter-spacing:-0.1px;">Calcular</span>
<div style="left:1604px;top:129px;width:306px;height:46px;border:1px solid #dcdcdc;"></div>
<span style="left:1610.5px;top:124.99px;font-size:11px;line-height:11px;background:#f0f0f0;padding:0 3px 0 2px;letter-spacing:-0.1px">Sobrecarga interior</span>
<span style="left:1616.4px;top:150.79px;font-size:11px;line-height:11px;color:#000;letter-spacing:-0.1px;">Sobrecarga en el interior del cajón, Q</span>
<span style="left:1796.5px;top:153.68px;font-size:9px;line-height:9px;color:#000;letter-spacing:-0.1px;">3</span>
<span style="left:1801.5px;top:150.79px;font-size:11px;line-height:11px;color:#000;letter-spacing:-0.1px;">:</span>
<div style="left:1811px;top:144px;width:44px;height:20px;border:1px solid #abadb3;background:#fff;"></div>
<span style="left:1816.7px;top:148.39px;font-size:11px;line-height:11px;color:#000;">2.59</span>
<span style="left:1866px;top:150.79px;font-size:11px;line-height:11px;color:#000;letter-spacing:-0.1px;">kN/m</span>
<span style="left:1891px;top:150.47px;font-size:7px;line-height:7px;color:#000;">2</span>
<div style="left:1604px;top:189px;width:306px;height:261px;border:1px solid #dcdcdc;"></div>
<span style="left:1610.5px;top:184.99px;font-size:11px;line-height:11px;background:#f0f0f0;padding:0 3px 0 2px;letter-spacing:-0.1px">Nivel freático</span>
<div style="left:1643px;top:206px;width:212px;height:135px;background:#fff;border-top:1px solid #8f8f8f;border-left:1px solid #8f8f8f;"></div>
<svg style="left:0;top:0" width="1920" height="460" viewBox="0 0 1920 460"><path d="M1650 213 H1851 L1849 219 C1838 225 1822 226 1817 236 C1812 250 1818 262 1816 276 C1814 290 1822 306 1817 322 C1812 330 1790 331 1760 331 L1700 331 C1685 331 1674 329 1673 321 C1676 306 1678 290 1678 274 C1677 258 1678 244 1676 234 C1670 224 1656 224 1651 219 Z" fill="url(#sand)"/><path fill-rule="evenodd" d="M1688 232 H1804.5 V317.5 H1688 Z M1697.5 249.5 L1718 241.5 H1773 L1794.5 249.5 V300 L1775 307 H1717 L1697.5 300 Z" fill="url(#conc)" stroke="#505050" stroke-width="1"/><path d="M1697.5 249.5 L1718 241.5 H1773 L1794.5 249.5 V300 L1775 307 H1717 L1697.5 300 Z" fill="#fff" stroke="#505050" stroke-width="1"/><path d="M1686 318.5 H1807" stroke="#777" stroke-width="1.2"/><path d="M1697.5 297.5 H1717 V303 H1775 V297.5 H1794.5" stroke="#888" stroke-width="1" fill="none"/><text x="1647" y="245" font-family="DejaVu Sans, Liberation Sans, sans-serif" font-weight="bold" fill="#000" font-size="10">z<tspan dx="1" dy="2.5" font-size="7">WI</tspan></text><text x="1830.5" y="263" font-family="DejaVu Sans, Liberation Sans, sans-serif" font-weight="bold" fill="#000" font-size="10">z<tspan dx="2" dy="2.5" font-size="7">WD</tspan></text><g stroke="#ff4040" stroke-width="1" fill="none" shape-rendering="crispEdges"><path d="M1646 249.5 H1664.5 V258 M1826.5 276 V268.5 H1851"/></g><path d="M1662 256.5 H1667 L1664.5 260.5Z M1824 274.5 H1829 L1826.5 278.5Z" fill="#ff3030"/><g stroke="#3f6cff" fill="none" shape-rendering="crispEdges"><path d="M1652.5 261 H1677 M1814.5 279 H1838.5" stroke-width="1.4"/><path d="M1659 264 H1672 M1662 267 H1668 M1820 282 H1833 M1823 285 H1829" stroke-width="1" stroke="#7a9aff"/></g></svg>
<div style="left:1643px;top:345px;width:242px;height:69px;background:#c0c0c0;border:1px solid #646464;"></div>
<div style="left:1644px;top:346px;width:60px;height:15px;background:#a9c4e9;border-right:1px solid #8caedb;border-bottom:1px solid #8caedb;"></div>
<svg style="left:1692px;top:349px" width="9" height="9"><path d="M9 0 V9 H0Z" fill="#d3e0f3"/></svg>
<span style="left:1655.4px;top:350.09px;font-size:11px;line-height:11px;color:#000;letter-spacing:-0.1px;">Módulo</span>
<div style="left:1704px;top:346px;width:49px;height:15px;background:linear-gradient(#fbdca6,#f9c979 50%,#f4b552);border-right:1px solid #e8a040;border-bottom:1px solid #e8a040;"></div>
<span style="left:1710.8px;top:350.09px;font-size:11px;line-height:11px;color:#000;letter-spacing:-0.1px;">Activar</span>
<div style="left:1753px;top:346px;width:57px;height:15px;background:#e9f1fc;border-right:1px solid #a9bfe0;border-bottom:1px solid #a9bfe0;"></div>
<span style="left:1763px;top:347.69px;font-size:11px;line-height:11px;color:#000;letter-spacing:-0.1px;">Z</span>
<span style="left:1771.5px;top:351.23px;font-size:8px;line-height:8px;color:#000;">wl</span>
<span style="left:1782px;top:347.69px;font-size:11px;line-height:11px;color:#000;letter-spacing:-0.1px;">(m)</span>
<div style="left:1810px;top:346px;width:57px;height:15px;background:#e9f1fc;border-right:1px solid #a9bfe0;border-bottom:1px solid #a9bfe0;"></div>
<span style="left:1819.1px;top:347.69px;font-size:11px;line-height:11px;color:#000;letter-spacing:-0.1px;">Z</span>
<span style="left:1827.5px;top:351.23px;font-size:8px;line-height:8px;color:#000;">wd</span>
<span style="left:1839px;top:347.69px;font-size:11px;line-height:11px;color:#000;letter-spacing:-0.1px;">(m)</span>
<div style="left:1644px;top:361px;width:60px;height:16px;background:#fbd48c;border-bottom:1px solid #f0a030;border-right:1px solid #f0a030;"></div>
<span style="left:1473.0px;width:400px;text-align:center;top:364.99px;font-size:11px;line-height:11px;color:#000;">1</span>
<div style="left:1704px;top:361px;width:49px;height:16px;background:#fff;border-right:1px solid #c0c0c0;border-bottom:1px solid #c0c0c0;"></div>
<div style="left:1722px;top:364px;width:11px;height:10px;background:#c8c8c8;border-right:2px solid #a0a0a0;border-bottom:2px solid #a0a0a0;border-top:1px solid #e8e8e8;border-left:1px solid #e8e8e8;"></div>
<div style="left:1753px;top:361px;width:57px;height:16px;background:#c9c9c9;border-right:1px solid #c0c0c0;border-bottom:1px solid #c0c0c0;"></div>
<div style="left:1810px;top:361px;width:57px;height:16px;background:#c9c9c9;border-right:1px solid #c0c0c0;border-bottom:1px solid #c0c0c0;"></div>
<span style="right:113.59999999999991px;top:364.09px;font-size:11px;line-height:11px;color:#000;">0.000</span>
<span style="right:56.799999999999955px;top:364.09px;font-size:11px;line-height:11px;color:#000;">0.000</span>
<div style="left:1644px;top:377px;width:60px;height:16px;background:#e4ecf7;border-bottom:1px solid #9ebde7;border-right:1px solid #9ebde7;"></div>
<span style="left:1473.0px;width:400px;text-align:center;top:380.99px;font-size:11px;line-height:11px;color:#000;">2</span>
<div style="left:1704px;top:377px;width:49px;height:16px;background:#fff;border-right:1px solid #c0c0c0;border-bottom:1px solid #c0c0c0;"></div>
<div style="left:1722px;top:380px;width:11px;height:10px;background:#c8c8c8;border-right:2px solid #a0a0a0;border-bottom:2px solid #a0a0a0;border-top:1px solid #e8e8e8;border-left:1px solid #e8e8e8;"></div>
<div style="left:1753px;top:377px;width:57px;height:16px;background:#c9c9c9;border-right:1px solid #c0c0c0;border-bottom:1px solid #c0c0c0;"></div>
<div style="left:1810px;top:377px;width:57px;height:16px;background:#c9c9c9;border-right:1px solid #c0c0c0;border-bottom:1px solid #c0c0c0;"></div>
<span style="right:113.59999999999991px;top:380.09px;font-size:11px;line-height:11px;color:#000;">0.000</span>
<span style="right:56.799999999999955px;top:380.09px;font-size:11px;line-height:11px;color:#000;">0.000</span>
<div style="left:1704px;top:360px;width:50px;height:17px;border:2px solid #000;"></div>
<div style="left:1643px;top:421px;width:13px;height:13px;border:1px solid #707070;background:#fff;"></div>
<span style="left:1658.5px;top:422.99px;font-size:11px;line-height:11px;color:#000;letter-spacing:-0.17px;">Considerar desequilibrio de empujes hidrostáticos</span>
<div style="left:1604px;top:462px;width:306px;height:74px;border:1px solid #dcdcdc;"></div>
<span style="left:1610.5px;top:457.99px;font-size:11px;line-height:11px;background:#f0f0f0;padding:0 3px 0 2px;letter-spacing:-0.1px">Gradiente de temperatura</span>
<span style="left:1624.4px;top:484.89px;font-size:11px;line-height:11px;color:#000;letter-spacing:-0.1px;">Diferencia de temperatura entre caras</span>
<span style="left:1624.4px;top:497.69px;font-size:11px;line-height:11px;color:#000;letter-spacing:-0.1px;">superior e inferior :</span>
<div style="left:1816px;top:495px;width:60px;height:20px;border:1px solid #abadb3;background:#fff;"></div>
<span style="left:1821.4px;top:499.99px;font-size:11px;line-height:11px;color:#000;">0</span>
<span style="left:1882px;top:499.69px;font-size:11px;line-height:11px;color:#000;letter-spacing:-0.5px;">ºC</span>
<div style="left:1604px;top:546px;width:306px;height:48px;border:1px solid #dcdcdc;"></div>
<span style="left:1610.5px;top:541.99px;font-size:11px;line-height:11px;background:#f0f0f0;padding:0 3px 0 2px;letter-spacing:-0.1px">Acción sísmica</span>
<span style="left:1676px;top:562.69px;font-size:11px;line-height:11px;color:#000;letter-spacing:-0.3px;">Aceleración sísmica :</span>
<div style="left:1786px;top:558px;width:60px;height:20px;border:1px solid #abadb3;background:#fff;"></div>
<span style="left:1791.5px;top:562.99px;font-size:11px;line-height:11px;color:#000;">0</span>
<span style="left:1854.6px;top:562.29px;font-size:11px;line-height:11px;color:#000;letter-spacing:-0.1px;">m/s</span>
<span style="left:1873px;top:562.07px;font-size:7px;line-height:7px;color:#000;">2</span>
<div style="left:1628px;top:600px;width:66px;height:21px;border:1px solid #acacac;background:linear-gradient(#f2f2f2,#ebebeb 50%,#e0e0e0);"></div>
<span style="left:1461.0px;width:400px;text-align:center;top:606.09px;font-size:11px;line-height:11px;color:#000;letter-spacing:-0.1px;">Ayuda</span>
<div style="left:1700px;top:600px;width:66px;height:21px;border:1px solid #acacac;background:linear-gradient(#f2f2f2,#ebebeb 50%,#e0e0e0);"></div>
<span style="left:1533.0px;width:400px;text-align:center;top:606.09px;font-size:11px;line-height:11px;color:#000;letter-spacing:-0.1px;">Aplicar</span>
<div style="left:1772px;top:600px;width:66px;height:21px;border:1px solid #acacac;background:linear-gradient(#f2f2f2,#ebebeb 50%,#e0e0e0);"></div>
<span style="left:1605.0px;width:400px;text-align:center;top:606.09px;font-size:11px;line-height:11px;color:#000;letter-spacing:-0.1px;">Aceptar</span>
<div style="left:1844px;top:600px;width:66px;height:21px;border:1px solid #acacac;background:linear-gradient(#f2f2f2,#ebebeb 50%,#e0e0e0);"></div>
<span style="left:1677.0px;width:400px;text-align:center;top:606.09px;font-size:11px;line-height:11px;color:#000;letter-spacing:-0.1px;">Cancelar</span>
<div style="left:1601px;top:1062px;width:1px;height:17px;background:#c8c8c8;"></div>
<div style="left:1602px;top:1062px;width:1px;height:17px;background:#fff;"></div>
<div style="left:1709px;top:1062px;width:1px;height:17px;background:#c8c8c8;"></div>
<div style="left:1710px;top:1062px;width:1px;height:17px;background:#fff;"></div>
<div style="left:1817px;top:1062px;width:1px;height:17px;background:#c8c8c8;"></div>
<div style="left:1818px;top:1062px;width:1px;height:17px;background:#fff;"></div>
<div style="left:1848px;top:1062px;width:1px;height:17px;background:#c8c8c8;"></div>
<div style="left:1849px;top:1062px;width:1px;height:17px;background:#fff;"></div>
<div style="left:1884px;top:1062px;width:1px;height:17px;background:#c8c8c8;"></div>
<div style="left:1885px;top:1062px;width:1px;height:17px;background:#fff;"></div>
<span style="left:1606.7px;top:1065.14px;font-size:12px;line-height:12px;color:#000;letter-spacing:-0.2px;">Capa :</span>
<span style="left:1714px;top:1065.14px;font-size:12px;line-height:12px;color:#000;letter-spacing:-0.2px;">Eje :</span>
<span style="left:1853px;top:1065.14px;font-size:12px;line-height:12px;color:#000;letter-spacing:-0.2px;">NUM</span>
<svg style="left:0;top:0" width="1" height="1"><path d="M1906.5 920.75 L1910 917.25 L1913.5 920.75" stroke="#606060" stroke-width="2" fill="none"/></svg>
<svg style="left:0;top:0" width="1" height="1"><path d="M1906.5 1049.25 L1910 1052.75 L1913.5 1049.25" stroke="#606060" stroke-width="2" fill="none"/></svg>
<div style="left:1903px;top:1025px;width:15px;height:17px;background:#cdcdcd;"></div>
<div style="left:913px;top:603px;width:669px;height:477px;background:#619fd4;border:1px solid #4c85bd;"></div>
<div style="left:921px;top:634px;width:653px;height:439px;background:#f0f0f0;"></div>
<span style="left:1047.0px;width:400px;text-align:center;top:611.10px;font-size:15px;line-height:15px;color:#000;letter-spacing:-0.29px;">Acciones permanentes</span>
<div style="left:1544px;top:604px;width:31px;height:20px;background:#c75050;"></div>
<svg style="left:1555px;top:609px" width="10" height="10" viewBox="0 0 10 10"><path d="M1 1 L9 9 M9 1 L1 9" stroke="#fff" stroke-width="1.8" fill="none"/></svg>
<div style="left:932px;top:651px;width:632px;height:127px;border:1px solid #dcdcdc;"></div>
<span style="left:938.5px;top:646.99px;font-size:11px;line-height:11px;background:#f0f0f0;padding:0 3px 0 2px;letter-spacing:-0.1px">Tierras de relleno (EV)</span>
<div style="left:1164px;top:667px;width:13px;height:13px;border:1px solid #707070;background:#fff;"></div>
<span style="left:1179.6px;top:668.79px;font-size:11px;line-height:11px;color:#000;letter-spacing:-0.1px;">Modificar las cargas de suelo para considerar la interacción suelo-estructura</span>
<div style="left:1176px;top:689px;width:375px;height:83px;border:1px solid #dcdcdc;"></div>
<span style="left:1190.9px;top:703.69px;font-size:11px;line-height:11px;color:#000;letter-spacing:-0.1px;">F</span>
<span style="left:1198.7px;top:707.73px;font-size:8px;line-height:8px;color:#000;letter-spacing:-0.45px;">e max</span>
<span style="left:1217.8px;top:703.69px;font-size:11px;line-height:11px;color:#000;letter-spacing:-0.02px;">, valor máximo del factor de modificación de cargas :</span>
<div style="left:1497px;top:699.5px;width:47px;height:22.5px;border:1px solid #d9d9d9;background:#f0f0f0;box-shadow:inset 0 0 0 1px #fafafa;"></div>
<span style="left:1503.8px;top:703.69px;font-size:11px;line-height:11px;color:#838383;">1.4</span>
<span style="left:1190.9px;top:731.79px;font-size:11px;line-height:11px;color:#000;letter-spacing:-0.1px;">W</span>
<span style="left:1201.5px;top:735.83px;font-size:8px;line-height:8px;color:#000;">E</span>
<span style="left:1210px;top:731.79px;font-size:11px;line-height:11px;color:#000;letter-spacing:-0.1px;">= F</span>
<span style="left:1230px;top:735.83px;font-size:8px;line-height:8px;color:#000;">e</span>
<span style="left:1234.5px;top:731.79px;font-size:11px;line-height:11px;color:#000;letter-spacing:-0.1px;">·</span>
<span style="left:1237.5px;top:731.79px;font-size:11px;line-height:11px;color:#000;font-style:italic;font-family:'Liberation Serif',serif;">γ</span>
<span style="left:1243px;top:731.79px;font-size:11px;line-height:11px;color:#000;letter-spacing:-0.1px;">·B</span>
<span style="left:1253.5px;top:735.83px;font-size:8px;line-height:8px;color:#000;">c</span>
<span style="left:1258px;top:731.79px;font-size:11px;line-height:11px;color:#000;letter-spacing:-0.1px;">·H ,</span>
<span style="left:1310.2px;top:731.79px;font-size:11px;line-height:11px;color:#000;letter-spacing:-0.1px;">F</span>
<span style="left:1318.5px;top:735.83px;font-size:8px;line-height:8px;color:#000;">e</span>
<span style="left:1325.5px;top:731.79px;font-size:11px;line-height:11px;color:#000;letter-spacing:0.05px;">= 1 + 0.20 · H/B</span>
<span style="left:1404px;top:735.83px;font-size:8px;line-height:8px;color:#000;">c</span>
<span style="left:1411px;top:731.79px;font-size:11px;line-height:11px;color:#000;letter-spacing:-0.1px;">&lt; F</span>
<span style="left:1429.5px;top:735.83px;font-size:8px;line-height:8px;color:#000;letter-spacing:-0.3px;">e max</span>
<span style="left:1190.4px;top:750.89px;font-size:11px;line-height:11px;color:#000;letter-spacing:0.07px;">(art. 12.11.2.2.1 AASHTO)</span>
<span style="left:952.2px;top:723.69px;font-size:11px;line-height:11px;color:#000;letter-spacing:-0.1px;">Densidad :</span>
<div style="left:1008px;top:720px;width:60px;height:23px;border:1px solid #abadb3;background:#fff;"></div>
<span style="left:1013.9px;top:724.59px;font-size:11px;line-height:11px;color:#000;">20</span>
<span style="left:1077px;top:723.69px;font-size:11px;line-height:11px;color:#000;letter-spacing:-0.1px;">kN/m</span>
<span style="left:1102px;top:723.37px;font-size:7px;line-height:7px;color:#000;">3</span>
<div style="left:932px;top:790px;width:632px;height:241px;border:1px solid #dcdcdc;"></div>
<span style="left:938.5px;top:785.99px;font-size:11px;line-height:11px;background:#f0f0f0;padding:0 3px 0 2px;letter-spacing:-0.1px">Superestructura (DC/DW)</span>
<div style="left:945px;top:810px;width:314px;height:86px;background:#c0c0c0;border:1px solid #646464;"></div>
<div style="left:946px;top:811px;width:80px;height:15px;background:#a9c4e9;border-right:1px solid #8caedb;border-bottom:1px solid #8caedb;"></div>
<svg style="left:1014px;top:815px" width="9" height="9"><path d="M9 0 V9 H0Z" fill="#d3e0f3"/></svg>
<span style="left:960.3px;top:814.59px;font-size:11px;line-height:11px;color:#000;letter-spacing:-0.1px;">Segmento</span>
<div style="left:1026px;top:811px;width:80px;height:15px;background:#e9f1fc;border-right:1px solid #a9bfe0;border-bottom:1px solid #a9bfe0;"></div>
<span style="left:1027.2px;top:812.89px;font-size:11px;line-height:11px;letter-spacing:-0.1px">Distancia D  (m)</span>
<div style="left:1106px;top:811px;width:70px;height:15px;background:#e9f1fc;border-right:1px solid #a9bfe0;border-bottom:1px solid #a9bfe0;"></div>
<span style="left:1117.5px;top:812.89px;font-size:11px;line-height:11px;color:#000;letter-spacing:-0.1px;">Q (kN/m</span>
<span style="left:1155.3px;top:814.42px;font-size:6px;line-height:6px;color:#000;">2</span>
<span style="left:1158.5px;top:812.89px;font-size:11px;line-height:11px;color:#000;letter-spacing:-0.1px;">)</span>
<div style="left:1176px;top:811px;width:66px;height:15px;background:linear-gradient(#ecf2fb,#dde7f6 50%,#cfdcf0);border-right:1px solid #a9bfe0;border-bottom:1px solid #a9bfe0;"></div>
<span style="left:1007.0px;width:400px;text-align:center;top:814.59px;font-size:11px;line-height:11px;color:#000;letter-spacing:-0.1px;">Tipo</span>
<div style="left:946px;top:826px;width:80px;height:16px;background:#fbd48c;border-bottom:1px solid #f0a030;border-right:1px solid #f0a030;"></div>
<span style="left:784.7px;width:400px;text-align:center;top:829.69px;font-size:11px;line-height:11px;color:#000;">1</span>
<div style="left:1026px;top:826px;width:80px;height:16px;background:#fff;border-right:1px solid #c0c0c0;border-bottom:1px solid #c0c0c0;"></div>
<span style="right:817.8px;top:829.39px;font-size:11px;line-height:11px;color:#000;">2.500</span>
<div style="left:1106px;top:826px;width:70px;height:16px;background:#fff;border-right:1px solid #c0c0c0;border-bottom:1px solid #c0c0c0;"></div>
<span style="right:747.8px;top:829.39px;font-size:11px;line-height:11px;color:#000;">0.00</span>
<div style="left:1176px;top:826px;width:66px;height:16px;background:#fff;border-right:1px solid #c0c0c0;border-bottom:1px solid #c0c0c0;"></div>
<span style="left:1177.2px;top:829.39px;font-size:11px;line-height:11px;color:#000;letter-spacing:-0.1px;">DC</span>
<div style="left:1225.5px;top:827px;width:16px;height:14px;background:linear-gradient(#f2f2f2,#dcdcdc);border:1px solid #b8b8b8;"></div>
<svg style="left:1225.5px;top:827px" width="16" height="14"><path d="M5.0 6.5 L8.0 9.5 L11.0 6.5" stroke="#404040" stroke-width="1.5" fill="none"/></svg>
<div style="left:946px;top:842px;width:80px;height:16px;background:#e4ecf7;border-bottom:1px solid #9ebde7;border-right:1px solid #9ebde7;"></div>
<span style="left:784.7px;width:400px;text-align:center;top:845.69px;font-size:11px;line-height:11px;color:#000;">2</span>
<div style="left:1026px;top:842px;width:80px;height:16px;background:#fff;border-right:1px solid #c0c0c0;border-bottom:1px solid #c0c0c0;"></div>
<span style="right:817.8px;top:845.39px;font-size:11px;line-height:11px;color:#000;">0.500</span>
<div style="left:1106px;top:842px;width:70px;height:16px;background:#fff;border-right:1px solid #c0c0c0;border-bottom:1px solid #c0c0c0;"></div>
<span style="right:747.8px;top:845.39px;font-size:11px;line-height:11px;color:#000;">10.00</span>
<div style="left:1176px;top:842px;width:66px;height:16px;background:#fff;border-right:1px solid #c0c0c0;border-bottom:1px solid #c0c0c0;"></div>
<span style="left:1177.2px;top:845.39px;font-size:11px;line-height:11px;color:#000;letter-spacing:-0.1px;">DC</span>
<div style="left:1225.5px;top:843px;width:16px;height:14px;background:linear-gradient(#f2f2f2,#dcdcdc);border:1px solid #b8b8b8;"></div>
<svg style="left:1225.5px;top:843px" width="16" height="14"><path d="M5.0 6.5 L8.0 9.5 L11.0 6.5" stroke="#404040" stroke-width="1.5" fill="none"/></svg>
<div style="left:946px;top:858px;width:80px;height:16px;background:#e4ecf7;border-bottom:1px solid #9ebde7;border-right:1px solid #9ebde7;"></div>
<span style="left:784.7px;width:400px;text-align:center;top:861.69px;font-size:11px;line-height:11px;color:#000;">3</span>
<div style="left:1026px;top:858px;width:80px;height:16px;background:#fff;border-right:1px solid #c0c0c0;border-bottom:1px solid #c0c0c0;"></div>
<span style="right:817.8px;top:861.39px;font-size:11px;line-height:11px;color:#000;">18.000</span>
<div style="left:1106px;top:858px;width:70px;height:16px;background:#fff;border-right:1px solid #c0c0c0;border-bottom:1px solid #c0c0c0;"></div>
<span style="right:747.8px;top:861.39px;font-size:11px;line-height:11px;color:#000;">3.00</span>
<div style="left:1176px;top:858px;width:66px;height:16px;background:#fff;border-right:1px solid #c0c0c0;border-bottom:1px solid #c0c0c0;"></div>
<span style="left:1177.2px;top:861.39px;font-size:11px;line-height:11px;color:#000;letter-spacing:-0.1px;">DC</span>
<div style="left:1225.5px;top:859px;width:16px;height:14px;background:linear-gradient(#f2f2f2,#dcdcdc);border:1px solid #b8b8b8;"></div>
<svg style="left:1225.5px;top:859px" width="16" height="14"><path d="M5.0 6.5 L8.0 9.5 L11.0 6.5" stroke="#404040" stroke-width="1.5" fill="none"/></svg>
<div style="left:946px;top:874px;width:80px;height:16px;background:#e4ecf7;border-bottom:1px solid #9ebde7;border-right:1px solid #9ebde7;"></div>
<span style="left:784.7px;width:400px;text-align:center;top:877.69px;font-size:11px;line-height:11px;color:#000;">4</span>
<div style="left:1026px;top:874px;width:80px;height:16px;background:#fff;border-right:1px solid #c0c0c0;border-bottom:1px solid #c0c0c0;"></div>
<span style="right:817.8px;top:877.39px;font-size:11px;line-height:11px;color:#000;">0.500</span>
<div style="left:1106px;top:874px;width:70px;height:16px;background:#fff;border-right:1px solid #c0c0c0;border-bottom:1px solid #c0c0c0;"></div>
<span style="right:747.8px;top:877.39px;font-size:11px;line-height:11px;color:#000;">10.00</span>
<div style="left:1176px;top:874px;width:66px;height:16px;background:#fff;border-right:1px solid #c0c0c0;border-bottom:1px solid #c0c0c0;"></div>
<span style="left:1177.2px;top:877.39px;font-size:11px;line-height:11px;color:#000;letter-spacing:-0.1px;">DC</span>
<div style="left:1225.5px;top:875px;width:16px;height:14px;background:linear-gradient(#f2f2f2,#dcdcdc);border:1px solid #b8b8b8;"></div>
<svg style="left:1225.5px;top:875px" width="16" height="14"><path d="M5.0 6.5 L8.0 9.5 L11.0 6.5" stroke="#404040" stroke-width="1.5" fill="none"/></svg>
<div style="left:1026px;top:825px;width:81px;height:18px;border:2px solid #000;"></div>
<div style="left:1262px;top:810px;width:293px;height:213px;background:#fff;border-top:1px solid #8f8f8f;border-left:1px solid #8f8f8f;"></div>
<svg style="left:0;top:0" width="1600" height="1080" viewBox="0 0 1600 1080"><g stroke="#ff4a4a" stroke-width="1" fill="none" shape-rendering="crispEdges"><path d="M1285 828.5 H1478 M1285.5 826 V844 M1342.5 826 V844 M1371.5 826 V844 M1449.5 826 V844 M1478.5 826 V844"/></g><path d="M1283.0 831.0 L1288.0 826.0" stroke="#ff2020" stroke-width="1"/><path d="M1340.0 831.0 L1345.0 826.0" stroke="#ff2020" stroke-width="1"/><path d="M1369.0 831.0 L1374.0 826.0" stroke="#ff2020" stroke-width="1"/><path d="M1447.0 831.0 L1452.0 826.0" stroke="#ff2020" stroke-width="1"/><path d="M1476.0 831.0 L1481.0 826.0" stroke="#ff2020" stroke-width="1"/><text x="1310" y="822.8" font-family="DejaVu Sans, Liberation Sans, sans-serif" font-weight="bold" fill="#000" font-size="9.5" text-anchor="middle">D<tspan dx="1.5" dy="2.5" font-size="7">1</tspan></text><text x="1356.5" y="822.8" font-family="DejaVu Sans, Liberation Sans, sans-serif" font-weight="bold" fill="#000" font-size="9.5" text-anchor="middle">D<tspan dx="1.5" dy="2.5" font-size="7">2</tspan></text><text x="1413" y="822.8" font-family="DejaVu Sans, Liberation Sans, sans-serif" font-weight="bold" fill="#000" font-size="9.5" text-anchor="middle">D<tspan dx="1.5" dy="2.5" font-size="7">3</tspan></text><text x="1461.5" y="822.8" font-family="DejaVu Sans, Liberation Sans, sans-serif" font-weight="bold" fill="#000" font-size="9.5" text-anchor="middle">D<tspan dx="1.5" dy="2.5" font-size="7">4</tspan></text><text x="1298" y="838.3" font-family="DejaVu Sans, Liberation Sans, sans-serif" font-weight="bold" fill="#000" font-size="9.5">Q<tspan dx="1.5" dy="2.5" font-size="7">1</tspan><tspan dx="1" dy="-2.5" font-size="9">=0</tspan></text><text x="1356.5" y="838.3" font-family="DejaVu Sans, Liberation Sans, sans-serif" font-weight="bold" fill="#000" font-size="9.5" text-anchor="middle">Q<tspan dx="1.5" dy="2.5" font-size="7">2</tspan></text><text x="1413" y="838.3" font-family="DejaVu Sans, Liberation Sans, sans-serif" font-weight="bold" fill="#000" font-size="9.5" text-anchor="middle">Q<tspan dx="1.5" dy="2.5" font-size="7">3</tspan></text><text x="1461.5" y="838.3" font-family="DejaVu Sans, Liberation Sans, sans-serif" font-weight="bold" fill="#000" font-size="9.5" text-anchor="middle">Q<tspan dx="1.5" dy="2.5" font-size="7">4</tspan></text><g stroke="#2a5cff" stroke-width="1" fill="none" shape-rendering="crispEdges"><path d="M1342.5 880 V862.5 H1371.5 V880 M1371.5 869.5 H1449.5 M1449.5 880 V862.5 H1478.5 V880"/><path d="M1357.5 862.5 V880 M1463.5 862.5 V880 M1386.5 869.5 V880 M1402.5 869.5 V880 M1418.5 869.5 V880 M1433.5 869.5 V880"/></g><path d="M1340.0 877 L1342.5 881 L1345.0 877 M1355.0 877 L1357.5 881 L1360.0 877 M1369.0 877 L1371.5 881 L1374.0 877 M1384.0 877 L1386.5 881 L1389.0 877 M1400.0 877 L1402.5 881 L1405.0 877 M1416.0 877 L1418.5 881 L1421.0 877 M1431.0 877 L1433.5 881 L1436.0 877 M1447.0 877 L1449.5 881 L1452.0 877 M1461.0 877 L1463.5 881 L1466.0 877 M1476.0 877 L1478.5 881 L1481.0 877" stroke="#2a5cff" stroke-width="1" fill="none"/><polygon points="1342,881.5 1478,881.5 1540.6,921.6 1293,915" fill="url(#sand)"/><path d="M1293 915 L1342 881.5 H1478 L1540.6 921.6" stroke="#222" stroke-width="1.1" fill="none"/><path d="M1293 915 L1540.6 921.6" stroke="#222" stroke-width="1"/><polygon points="1285.5,907.5 1293,907.5 1293,915 1540.6,921.6 1540.6,913.6 1548,913.6 1548,931.6 1285.5,924.3" fill="url(#conc)" stroke="#505050" stroke-width=".8"/><path d="M1285.5 924.3 V982 M1548 931.6 V987" stroke="#8a8a8a" stroke-width="1"/><polygon points="1266,970.5 1554,976 1554,980 1266,975.5" fill="url(#sand)"/><path d="M1266 970.3 L1554 976" stroke="#222" stroke-width="1" stroke-dasharray="40 4"/><polygon points="1285.5,981.5 1548,986.9 1548,1011.6 1534.7,1011.6 1526.7,996 1307.7,991.8 1299.2,1006.2 1285.5,1006.2" fill="url(#conc)" stroke="#505050" stroke-width=".8"/><path d="M1307.7 992.8 L1526.7 997" stroke="#fff" stroke-width="1"/></svg>
<div style="left:946px;top:906px;width:100px;height:21px;border:1px solid #acacac;background:linear-gradient(#f2f2f2,#ebebeb 50%,#e0e0e0);"></div>
<span style="left:796.0px;width:400px;text-align:center;top:911.79px;font-size:11px;line-height:11px;color:#000;letter-spacing:-0.1px;">Añadir segmento</span>
<div style="left:1053px;top:906px;width:100px;height:21px;border:1px solid #acacac;background:linear-gradient(#f2f2f2,#ebebeb 50%,#e0e0e0);"></div>
<span style="left:903.0px;width:400px;text-align:center;top:911.79px;font-size:11px;line-height:11px;color:#000;letter-spacing:-0.1px;">Eliminar segmento</span>
<div style="left:1263px;top:1040px;width:73px;height:21px;border:1px solid #acacac;background:linear-gradient(#f2f2f2,#ebebeb 50%,#e0e0e0);"></div>
<span style="left:1099.5px;width:400px;text-align:center;top:1045.29px;font-size:11px;line-height:11px;color:#000;letter-spacing:-0.1px;">Ayuda</span>
<div style="left:1338px;top:1040px;width:73px;height:21px;border:1px solid #acacac;background:linear-gradient(#f2f2f2,#ebebeb 50%,#e0e0e0);"></div>
<span style="left:1174.5px;width:400px;text-align:center;top:1045.29px;font-size:11px;line-height:11px;color:#000;letter-spacing:-0.1px;">Aplicar</span>
<div style="left:1413px;top:1040px;width:73px;height:21px;border:1px solid #3399ff;background:linear-gradient(#f2f2f2,#ebebeb 50%,#e0e0e0);"></div>
<span style="left:1249.5px;width:400px;text-align:center;top:1045.29px;font-size:11px;line-height:11px;color:#000;letter-spacing:-0.1px;">Aceptar</span>
<div style="left:1488px;top:1040px;width:73px;height:21px;border:1px solid #acacac;background:linear-gradient(#f2f2f2,#ebebeb 50%,#e0e0e0);"></div>
<span style="left:1324.5px;width:400px;text-align:center;top:1045.29px;font-size:11px;line-height:11px;color:#000;letter-spacing:-0.1px;">Cancelar</span></body></html>
